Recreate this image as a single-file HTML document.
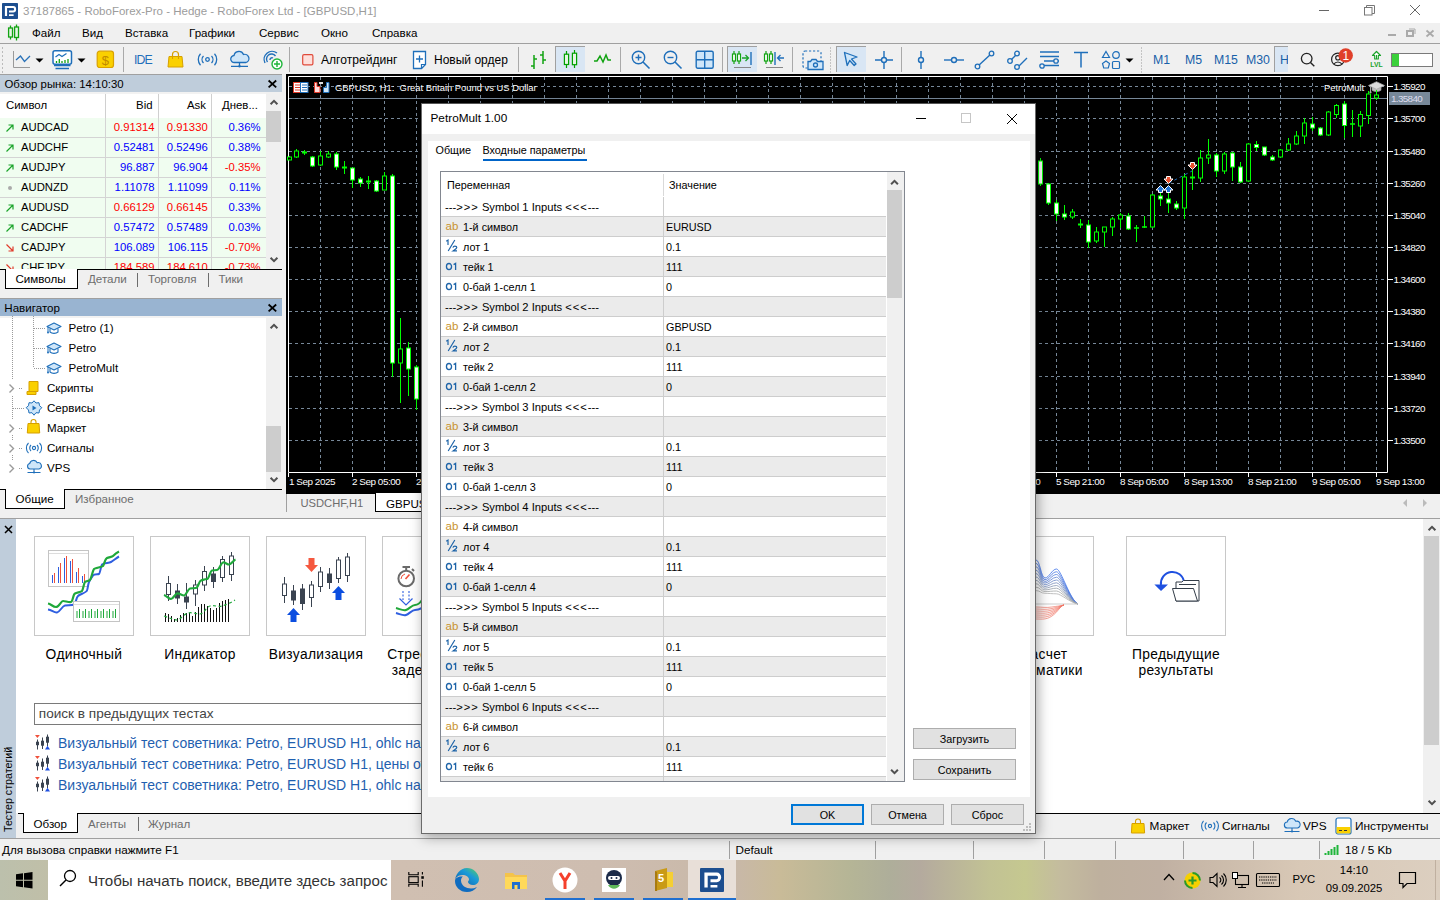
<!DOCTYPE html><html><head><meta charset="utf-8"><style>
*{box-sizing:border-box;margin:0;padding:0}
html,body{width:1440px;height:900px;overflow:hidden;background:#f0f0f0;font-family:"Liberation Sans",sans-serif;color:#000}
.a{position:absolute}
.t{position:absolute;white-space:nowrap;line-height:1}
svg{position:absolute;overflow:visible}
</style></head><body>
<div class="a" style="left:0px;top:0px;width:1440px;height:23px;background:#fff;"></div>
<svg style="left:2px;top:3px;" width="16" height="16" viewBox="0 0 16 16"><rect x="0" y="0" width="16" height="16" rx="0.8" fill="#1d4e8f"/><path d="M2.9 3H11.2A2.9 3.2 0 0 1 11.2 9.5H7V7.5H11A1 1.1 0 0 0 11 5.1H5.1V13H2.9z" fill="#fff"/><rect x="7" y="11.3" width="4.6" height="1.7" fill="#fff"/></svg>
<div class="t" style="left:23px;top:5.88px;font-size:11.5px;color:#9c9c9c;">37187865 - RoboForex-Pro - Hedge - RoboForex Ltd - [GBPUSD,H1]</div>
<div class="a" style="left:1319px;top:10px;width:10px;height:1px;background:#666;"></div>
<svg style="left:1364px;top:5px;" width="11" height="11" viewBox="0 0 11 11"><rect x="0.5" y="2.5" width="7.5" height="7.5" fill="none" stroke="#777"/><path d="M2.5 2.5V0.5h8v8H8" fill="none" stroke="#777"/></svg>
<svg style="left:1409px;top:4px;" width="12" height="12" viewBox="0 0 12 12"><path d="M1 1L11 11M11 1L1 11" stroke="#666" stroke-width="1"/></svg>
<div class="a" style="left:0px;top:23px;width:1440px;height:20px;background:#f0f0f0;"></div>
<div class="a" style="left:0px;top:43px;width:1440px;height:1px;background:#a0a0a0;"></div>
<svg style="left:7px;top:24px;" width="14" height="17" viewBox="0 0 14 17"><path d="M3.5 1.5v14M9.5 0.5v16" stroke="#12a312" stroke-width="1.3"/><rect x="1.6" y="4" width="3.9" height="9" fill="#e4f6e4" stroke="#12a312" stroke-width="1.3"/><rect x="7.6" y="3" width="3.9" height="10.5" fill="#e4f6e4" stroke="#12a312" stroke-width="1.3"/></svg>
<div class="t" style="left:32px;top:26.73px;font-size:11.6px;color:#000;">Файл</div>
<div class="t" style="left:82px;top:26.73px;font-size:11.6px;color:#000;">Вид</div>
<div class="t" style="left:125px;top:26.73px;font-size:11.6px;color:#000;">Вставка</div>
<div class="t" style="left:189px;top:26.73px;font-size:11.6px;color:#000;">Графики</div>
<div class="t" style="left:259px;top:26.73px;font-size:11.6px;color:#000;">Сервис</div>
<div class="t" style="left:321px;top:26.73px;font-size:11.6px;color:#000;">Окно</div>
<div class="t" style="left:372px;top:26.73px;font-size:11.6px;color:#000;">Справка</div>
<div class="a" style="left:1388px;top:34px;width:8px;height:2px;background:#aaa;"></div>
<svg style="left:1406px;top:28px;" width="10" height="9" viewBox="0 0 10 9"><rect x="1" y="3" width="6" height="5" fill="none" stroke="#aaa" stroke-width="2"/><path d="M3 1h6v5" fill="none" stroke="#aaa" stroke-width="1"/></svg>
<svg style="left:1426px;top:30px;" width="8" height="7" viewBox="0 0 8 7"><path d="M0.5 0.5L7.5 6.5M7.5 0.5L0.5 6.5" stroke="#aaa" stroke-width="1.8"/></svg>
<div class="a" style="left:0px;top:44px;width:1440px;height:30px;background:#f0f0f0;"></div>
<div class="a" style="left:2px;top:47px;width:1px;height:2px;background:#bbb;"></div>
<div class="a" style="left:2px;top:51px;width:1px;height:2px;background:#bbb;"></div>
<div class="a" style="left:2px;top:55px;width:1px;height:2px;background:#bbb;"></div>
<div class="a" style="left:2px;top:59px;width:1px;height:2px;background:#bbb;"></div>
<div class="a" style="left:2px;top:63px;width:1px;height:2px;background:#bbb;"></div>
<div class="a" style="left:2px;top:67px;width:1px;height:2px;background:#bbb;"></div>
<div class="a" style="left:2px;top:71px;width:1px;height:2px;background:#bbb;"></div>
<svg style="left:12px;top:50px;" width="20" height="19" viewBox="0 0 20 19"><path d="M1.5 1v16.5H18" fill="none" stroke="#999" stroke-width="1"/><path d="M4 10L8.5 6 12.5 11.5 18 6" fill="none" stroke="#2a72b8" stroke-width="1.3"/></svg>
<svg style="left:35px;top:58px;" width="9" height="5" viewBox="0 0 9 5"><path d="M0.5 0.5h8L4.5 4.5z" fill="#000"/></svg>
<svg style="left:52px;top:50px;" width="21" height="20" viewBox="0 0 21 20"><rect x="1" y="0.8" width="18.5" height="13.5" rx="2" fill="#fff" stroke="#1f6fba" stroke-width="1.5"/><path d="M3.5 7l3.5-2.5 3 2 4.5-3" fill="none" stroke="#1f6fba" stroke-width="1.2"/><path d="M4.5 11v2M7.3 9v4M10 11v2M13 10v3M16 9v4" stroke="#12a312" stroke-width="1.3"/><path d="M2 15.5h16.5M3.5 18.5h13.5" stroke="#1f6fba" stroke-width="1.3"/></svg>
<svg style="left:77px;top:58px;" width="9" height="5" viewBox="0 0 9 5"><path d="M0.5 0.5h8L4.5 4.5z" fill="#000"/></svg>
<svg style="left:96px;top:50px;" width="19" height="19" viewBox="0 0 19 19"><rect x="1.2" y="1.2" width="16.3" height="16.3" rx="2.5" fill="#fad000" stroke="#daa200" stroke-width="1.2"/><text x="9.35" y="14.6" font-family="Liberation Sans" font-size="13" fill="#c18a00" text-anchor="middle">$</text></svg>
<div class="a" style="left:123px;top:47px;width:1px;height:25px;background:#a9a9a9;"></div>
<div class="t" style="left:134px;top:53.60px;font-size:12.3px;color:#1f6fba;letter-spacing:-0.9px">IDE</div>
<svg style="left:167px;top:50px;" width="17" height="18" viewBox="0 0 17 18"><path d="M5.5 6V4.5a3 3 0 0 1 6 0V6" fill="none" stroke="#d6a000" stroke-width="1.2"/><path d="M2 6.5h13l1 10.5H1z" fill="#fad000" stroke="#d6a000" stroke-width="1"/><path d="M5.5 6v3M11.5 6v3" stroke="#d6a000" stroke-width="1.1"/></svg>
<svg style="left:198px;top:53px;" width="19" height="13" viewBox="0 0 19 13"><circle cx="9.5" cy="6.5" r="1.8" fill="none" stroke="#1f6fba" stroke-width="1.3"/><path d="M5.5 3a5 5 0 0 0 0 7M13.5 3a5 5 0 0 1 0 7M2.5 0.8a8.5 8.5 0 0 0 0 11.4M16.5 0.8a8.5 8.5 0 0 1 0 11.4" fill="none" stroke="#1f6fba" stroke-width="1.3"/></svg>
<svg style="left:230px;top:51px;" width="20" height="18" viewBox="0 0 20 18"><path d="M4.5 11.5a3.5 3.5 0 0 1-0.5-7 5 5 0 0 1 9.5-1 3.7 3.7 0 0 1 2.5 8z" fill="#cfe6f9" stroke="#1f6fba" stroke-width="1.3"/><path d="M9.5 11.5v3.5M1 15.3h17" stroke="#1f6fba" stroke-width="1.3"/><circle cx="9.5" cy="15.3" r="1.2" fill="#1f6fba"/></svg>
<svg style="left:262px;top:50px;" width="21" height="20" viewBox="0 0 21 20"><path d="M3 13a8 8 0 0 1 12-10M5.5 12a5 5 0 0 1 8-6M8 10a2 2 0 0 1 3-2" fill="none" stroke="#1f6fba" stroke-width="1.4"/><circle cx="15" cy="14" r="5" fill="#fff" stroke="#1fb53a" stroke-width="1.4"/><path d="M15 11v6M12 14h6" stroke="#1fb53a" stroke-width="1.4"/></svg>
<div class="a" style="left:289px;top:47px;width:1px;height:25px;background:#a9a9a9;"></div>
<svg style="left:301px;top:53px;" width="14" height="14" viewBox="0 0 14 14"><rect x="1.7" y="1.7" width="10.2" height="10.2" rx="1.3" fill="#fde0dc" stroke="#e04a3a" stroke-width="1.2"/></svg>
<div class="t" style="left:321px;top:54.29px;font-size:12.1px;color:#000;">Алготрейдинг</div>
<svg style="left:412px;top:50px;" width="17" height="20" viewBox="0 0 17 20"><path d="M1.5 1.5h9l0 0h3v13l-4 4h-8z" fill="#fff" stroke="#1f6fba" stroke-width="1.3"/><path d="M13.5 14.5h-4v4" fill="none" stroke="#1f6fba" stroke-width="1.2"/><path d="M7.5 5.5v7M4 9h7" stroke="#1f6fba" stroke-width="1.3"/></svg>
<div class="t" style="left:434px;top:54.34px;font-size:12px;color:#000;">Новый ордер</div>
<div class="a" style="left:518px;top:47px;width:1px;height:25px;background:#a9a9a9;"></div>
<svg style="left:529px;top:50px;" width="19" height="19" viewBox="0 0 19 19"><path d="M5 5v14M2 16h3M5 9h3M14 1v13M11 5h3M14 10h3" stroke="#12a312" stroke-width="1.5" fill="none"/></svg>
<div class="a" style="left:555px;top:46px;width:30px;height:26px;background:#d9e6f4;border-top:1px solid #a0a0a0;border-left:1px solid #a0a0a0"></div>
<svg style="left:562px;top:50px;" width="17" height="19" viewBox="0 0 17 19"><path d="M4.5 1v17M12.5 0v18" stroke="#00a000" stroke-width="1.2"/><rect x="2.4" y="4.2" width="4.2" height="10.3" fill="#e4f6e4" stroke="#00a000" stroke-width="1.2"/><rect x="10.4" y="3.2" width="4.2" height="11.5" fill="#e4f6e4" stroke="#00a000" stroke-width="1.2"/></svg>
<svg style="left:593px;top:52px;" width="19" height="12" viewBox="0 0 19 12"><path d="M1 9h3l3-5 3 6 3-7 2 5h3" fill="none" stroke="#12a312" stroke-width="1.5"/></svg>
<div class="a" style="left:620px;top:47px;width:1px;height:25px;background:#a9a9a9;"></div>
<svg style="left:631px;top:50px;" width="20" height="20" viewBox="0 0 20 20"><circle cx="7.5" cy="7.5" r="6.2" fill="none" stroke="#1f6fba" stroke-width="1.4"/><path d="M12 12l6.5 6.5" stroke="#1f6fba" stroke-width="1.6"/><path d="M7.5 4.5v6M4.5 7.5h6" stroke="#1f6fba" stroke-width="1.4"/></svg>
<svg style="left:663px;top:50px;" width="20" height="20" viewBox="0 0 20 20"><circle cx="7.5" cy="7.5" r="6.2" fill="none" stroke="#1f6fba" stroke-width="1.4"/><path d="M12 12l6.5 6.5" stroke="#1f6fba" stroke-width="1.6"/><path d="M4.5 7.5h6" stroke="#1f6fba" stroke-width="1.4"/></svg>
<svg style="left:695px;top:50px;" width="20" height="20" viewBox="0 0 20 20"><rect x="1.2" y="1.2" width="17" height="17" rx="1.5" fill="#cfe6f9" stroke="#1f6fba" stroke-width="1.4"/><path d="M9.7 1.2v17M1.2 9.7h17" stroke="#1f6fba" stroke-width="1.4"/></svg>
<div class="a" style="left:722px;top:47px;width:1px;height:25px;background:#a9a9a9;"></div>
<div class="a" style="left:727px;top:46px;width:30px;height:26px;background:#d9e6f4;border-top:1px solid #a0a0a0;border-left:1px solid #a0a0a0"></div>
<svg style="left:731px;top:51px;" width="22" height="18" viewBox="0 0 22 18"><path d="M3 0v13M8 0v13" stroke="#12a312" stroke-width="1.2"/><rect x="1.5" y="3" width="3" height="7" fill="#fff" stroke="#12a312" stroke-width="1.2"/><rect x="6.5" y="3" width="3" height="7" fill="#fff" stroke="#12a312" stroke-width="1.2"/><path d="M11 7h6M14.5 4l3 3-3 3" fill="none" stroke="#1aa32a" stroke-width="1.3"/><path d="M20 1v13" stroke="#1f6fba" stroke-width="1.4"/><path d="M3 16.5h17" stroke="#888" stroke-width="1"/></svg>
<svg style="left:763px;top:51px;" width="22" height="18" viewBox="0 0 22 18"><path d="M3 0v13M8 0v13" stroke="#12a312" stroke-width="1.2"/><rect x="1.5" y="3" width="3" height="7" fill="#fff" stroke="#12a312" stroke-width="1.2"/><rect x="6.5" y="3" width="3" height="7" fill="#fff" stroke="#12a312" stroke-width="1.2"/><path d="M12 1v13" stroke="#1f6fba" stroke-width="1.4"/><path d="M21 7h-6M17.5 4l-3 3 3 3" fill="none" stroke="#1f6fba" stroke-width="1.3"/><path d="M3 16.5h17" stroke="#888" stroke-width="1"/></svg>
<div class="a" style="left:792px;top:47px;width:1px;height:25px;background:#a9a9a9;"></div>
<svg style="left:802px;top:50px;" width="22" height="20" viewBox="0 0 22 20"><rect x="1" y="1" width="18" height="17" rx="2" fill="none" stroke="#1f6fba" stroke-width="1.2" stroke-dasharray="2.2 1.8"/><path d="M6 11.5h2.5l1.5-2h4l1.5 2H21v8H6z" fill="#cfe6f9" stroke="#1f6fba" stroke-width="1.3"/><circle cx="13.5" cy="15" r="2" fill="none" stroke="#1f6fba" stroke-width="1.3"/></svg>
<div class="a" style="left:830px;top:47px;width:1px;height:2px;background:#c4c4c4;"></div>
<div class="a" style="left:830px;top:50px;width:1px;height:2px;background:#c4c4c4;"></div>
<div class="a" style="left:830px;top:53px;width:1px;height:2px;background:#c4c4c4;"></div>
<div class="a" style="left:830px;top:56px;width:1px;height:2px;background:#c4c4c4;"></div>
<div class="a" style="left:830px;top:59px;width:1px;height:2px;background:#c4c4c4;"></div>
<div class="a" style="left:830px;top:62px;width:1px;height:2px;background:#c4c4c4;"></div>
<div class="a" style="left:830px;top:65px;width:1px;height:2px;background:#c4c4c4;"></div>
<div class="a" style="left:830px;top:68px;width:1px;height:2px;background:#c4c4c4;"></div>
<div class="a" style="left:830px;top:71px;width:1px;height:2px;background:#c4c4c4;"></div>
<div class="a" style="left:836px;top:46px;width:30px;height:26px;background:#d9e6f4;border-top:1px solid #a0a0a0;border-left:1px solid #a0a0a0"></div>
<svg style="left:843px;top:51px;" width="16" height="16" viewBox="0 0 16 16"><path d="M1.5 1.5l12.5 4.5-5.5 2 4.5 5-1.8 1.5-4.5-5-2.5 5z" fill="#cfe6f9" stroke="#1f6fba" stroke-width="1.3" stroke-linejoin="round"/></svg>
<svg style="left:874px;top:50px;" width="20" height="20" viewBox="0 0 20 20"><path d="M10 1v18M1 10h18" stroke="#1f6fba" stroke-width="1.4"/><circle cx="10" cy="10" r="2.5" fill="#f0f0f0" stroke="#1f6fba" stroke-width="1.4"/></svg>
<div class="a" style="left:901px;top:47px;width:1px;height:25px;background:#a9a9a9;"></div>
<svg style="left:915px;top:50px;" width="12" height="20" viewBox="0 0 12 20"><path d="M6 1v18" stroke="#1f6fba" stroke-width="1.4"/><circle cx="6" cy="10" r="2.5" fill="#f0f0f0" stroke="#1f6fba" stroke-width="1.4"/></svg>
<svg style="left:943px;top:50px;" width="22" height="20" viewBox="0 0 22 20"><path d="M1 10h20" stroke="#1f6fba" stroke-width="1.4"/><circle cx="11" cy="10" r="2.5" fill="#f0f0f0" stroke="#1f6fba" stroke-width="1.4"/></svg>
<svg style="left:974px;top:50px;" width="21" height="20" viewBox="0 0 21 20"><path d="M4 16L17 4" stroke="#1f6fba" stroke-width="1.4"/><circle cx="3.5" cy="16.5" r="2.3" fill="#f0f0f0" stroke="#1f6fba" stroke-width="1.3"/><circle cx="17.5" cy="3.5" r="2.3" fill="#f0f0f0" stroke="#1f6fba" stroke-width="1.3"/></svg>
<svg style="left:1007px;top:50px;" width="22" height="20" viewBox="0 0 22 20"><path d="M3 11L10 4M11 17L20 8" stroke="#1f6fba" stroke-width="1.4"/><circle cx="3" cy="11" r="2.3" fill="#f0f0f0" stroke="#1f6fba" stroke-width="1.3"/><circle cx="10" cy="3.5" r="2.3" fill="#f0f0f0" stroke="#1f6fba" stroke-width="1.3"/><circle cx="10" cy="17" r="2.3" fill="#f0f0f0" stroke="#1f6fba" stroke-width="1.3"/></svg>
<svg style="left:1039px;top:50px;" width="21" height="20" viewBox="0 0 21 20"><path d="M1 2h19M1 6.5h19M5 11h15M5 15.5h15" stroke="#1f6fba" stroke-width="1.3"/><circle cx="17" cy="11" r="2.2" fill="#f0f0f0" stroke="#1f6fba" stroke-width="1.3"/><circle cx="3" cy="16" r="2.2" fill="#f0f0f0" stroke="#1f6fba" stroke-width="1.3"/></svg>
<svg style="left:1073px;top:51px;" width="16" height="17" viewBox="0 0 16 17"><path d="M1 1.5h14M8 1.5v15" stroke="#1f6fba" stroke-width="1.5"/></svg>
<svg style="left:1101px;top:50px;" width="22" height="20" viewBox="0 0 22 20"><path d="M5 1.5l3.5 6h-7z" fill="none" stroke="#1f6fba" stroke-width="1.2"/><circle cx="15" cy="5" r="3.3" fill="none" stroke="#1f6fba" stroke-width="1.2"/><path d="M5 11l3.5 2.5-1.2 4.5h-4.6L1.5 13.5z" fill="none" stroke="#1f6fba" stroke-width="1.2"/><rect x="11.5" y="11.5" width="7" height="7" rx="1" fill="none" stroke="#1f6fba" stroke-width="1.2"/></svg>
<svg style="left:1125px;top:58px;" width="9" height="5" viewBox="0 0 9 5"><path d="M0.5 0.5h8L4.5 4.5z" fill="#000"/></svg>
<div class="a" style="left:1141px;top:47px;width:1px;height:2px;background:#c4c4c4;"></div>
<div class="a" style="left:1141px;top:50px;width:1px;height:2px;background:#c4c4c4;"></div>
<div class="a" style="left:1141px;top:53px;width:1px;height:2px;background:#c4c4c4;"></div>
<div class="a" style="left:1141px;top:56px;width:1px;height:2px;background:#c4c4c4;"></div>
<div class="a" style="left:1141px;top:59px;width:1px;height:2px;background:#c4c4c4;"></div>
<div class="a" style="left:1141px;top:62px;width:1px;height:2px;background:#c4c4c4;"></div>
<div class="a" style="left:1141px;top:65px;width:1px;height:2px;background:#c4c4c4;"></div>
<div class="a" style="left:1141px;top:68px;width:1px;height:2px;background:#c4c4c4;"></div>
<div class="a" style="left:1141px;top:71px;width:1px;height:2px;background:#c4c4c4;"></div>
<div class="t" style="left:1153px;top:54.30px;font-size:12.3px;color:#1860a8;">M1</div>
<div class="t" style="left:1185px;top:54.30px;font-size:12.3px;color:#1860a8;">M5</div>
<div class="t" style="left:1214px;top:54.30px;font-size:12.3px;color:#1860a8;">M15</div>
<div class="t" style="left:1246px;top:54.30px;font-size:12.3px;color:#1860a8;">M30</div>
<div class="a" style="left:1274px;top:46px;width:14px;height:26px;background:#d9e6f4;border-top:1px solid #a0a0a0;border-left:1px solid #a0a0a0;overflow:hidden"><div class="t" style="left:5px;top:7.1px;font-size:12.3px;color:#1860a8">H</div></div>
<svg style="left:1299px;top:51px;" width="18" height="18" viewBox="0 0 18 18"><circle cx="7.7" cy="7.6" r="5.3" fill="none" stroke="#222" stroke-width="1.3"/><path d="M11.5 11.5l3.8 3.8" stroke="#222" stroke-width="1.4"/></svg>
<svg style="left:1330px;top:52px;" width="16" height="16" viewBox="0 0 16 16"><circle cx="7.9" cy="7.4" r="6.3" fill="none" stroke="#222" stroke-width="1.2"/><circle cx="7.9" cy="5.8" r="2.2" fill="none" stroke="#222" stroke-width="1.2"/><path d="M3.8 12.3a4.8 4.8 0 0 1 8.2 0" fill="none" stroke="#222" stroke-width="1.2"/></svg>
<svg style="left:1338px;top:48px;" width="16" height="16" viewBox="0 0 16 16"><circle cx="7.7" cy="7.5" r="7.2" fill="#e0402a"/><text x="7.9" y="12.2" font-family="Liberation Sans" font-size="12" fill="#fff" text-anchor="middle">1</text></svg>
<svg style="left:1369px;top:50px;" width="16" height="18" viewBox="0 0 16 18"><path d="M7.5 1.5L11.5 5.5H9.3V9H5.7V5.5H3.5z" fill="#fff" stroke="#1aa32a" stroke-width="1.2" stroke-linejoin="round"/><path d="M7.5 5v4" stroke="#1aa32a" stroke-width="1"/><text x="7.5" y="16.5" font-family="Liberation Sans" font-size="6.8" font-weight="bold" fill="#1aa32a" text-anchor="middle">LVL</text></svg>
<div class="a" style="left:1391px;top:53px;width:42px;height:14px;background:#fff;border:1px solid #7a7a7a"></div>
<div class="a" style="left:1392px;top:54px;width:7px;height:12px;background:#3ad03a;"></div>
<div class="a" style="left:0px;top:74px;width:282px;height:1px;background:#a0a0a0;"></div>
<div class="a" style="left:0px;top:75px;width:282px;height:17px;background:#bfcddb;"></div>
<div class="t" style="left:4.5px;top:78.53px;font-size:11.4px;color:#000;">Обзор рынка: 14:10:30</div>
<svg style="left:267px;top:79px;" width="11" height="10" viewBox="0 0 11 10"><path d="M1.6 1.5L9.2 8.3M9.2 1.5L1.6 8.3" stroke="#000" stroke-width="1.8"/></svg>
<div class="a" style="left:0px;top:92px;width:266px;height:177px;background:#fff;"></div>
<div class="a" style="left:0px;top:92px;width:266px;height:2px;background:#f2f2f2;"></div>
<div class="t" style="left:6px;top:100.33px;font-size:11.4px;color:#000;">Символ</div>
<div class="t" style="right:1287.5px;top:100.33px;font-size:11.4px;color:#000;">Bid</div>
<div class="t" style="right:1234px;top:100.33px;font-size:11.4px;color:#000;">Ask</div>
<div class="t" style="left:222px;top:100.33px;font-size:11.4px;color:#000;">Днев...</div>
<div class="a" style="left:105px;top:94px;width:1px;height:24px;background:#d0d0d0;"></div>
<div class="a" style="left:158px;top:94px;width:1px;height:24px;background:#d0d0d0;"></div>
<div class="a" style="left:211px;top:94px;width:1px;height:24px;background:#d0d0d0;"></div>
<div class="a" style="left:0;top:118px;width:266px;height:151px;overflow:hidden">
<div class="a" style="left:0;top:0px;width:266px;height:19px;background:#f0fdf0"></div>
<div class="a" style="left:0;top:19px;width:266px;height:1px;background:#d4d4d4"></div>
<div class="a" style="left:105px;top:0px;width:1px;height:20px;background:#d4d4d4"></div>
<div class="a" style="left:158px;top:0px;width:1px;height:20px;background:#d4d4d4"></div>
<div class="a" style="left:211px;top:0px;width:1px;height:20px;background:#d4d4d4"></div>
<svg style="left:5px;top:5px" width="10" height="10"><path d="M1.5 8.5L8 2M3.5 2H8v4.5" fill="none" stroke="#1aa32a" stroke-width="1.2"/></svg>
<div class="t" style="left:21px;top:4.0px;font-size:11.3px">AUDCAD</div>
<div class="t" style="right:111.4px;top:4.0px;font-size:11.3px;color:#f00">0.91314</div>
<div class="t" style="right:58.3px;top:4.0px;font-size:11.3px;color:#f00">0.91330</div>
<div class="t" style="right:5.5px;top:4.0px;font-size:11.3px;color:#00f">0.36%</div>
<div class="a" style="left:0;top:20px;width:266px;height:19px;background:#f0fdf0"></div>
<div class="a" style="left:0;top:39px;width:266px;height:1px;background:#d4d4d4"></div>
<div class="a" style="left:105px;top:20px;width:1px;height:20px;background:#d4d4d4"></div>
<div class="a" style="left:158px;top:20px;width:1px;height:20px;background:#d4d4d4"></div>
<div class="a" style="left:211px;top:20px;width:1px;height:20px;background:#d4d4d4"></div>
<svg style="left:5px;top:25px" width="10" height="10"><path d="M1.5 8.5L8 2M3.5 2H8v4.5" fill="none" stroke="#1aa32a" stroke-width="1.2"/></svg>
<div class="t" style="left:21px;top:24.0px;font-size:11.3px">AUDCHF</div>
<div class="t" style="right:111.4px;top:24.0px;font-size:11.3px;color:#00f">0.52481</div>
<div class="t" style="right:58.3px;top:24.0px;font-size:11.3px;color:#00f">0.52496</div>
<div class="t" style="right:5.5px;top:24.0px;font-size:11.3px;color:#00f">0.38%</div>
<div class="a" style="left:0;top:40px;width:266px;height:19px;background:#f0fdf0"></div>
<div class="a" style="left:0;top:59px;width:266px;height:1px;background:#d4d4d4"></div>
<div class="a" style="left:105px;top:40px;width:1px;height:20px;background:#d4d4d4"></div>
<div class="a" style="left:158px;top:40px;width:1px;height:20px;background:#d4d4d4"></div>
<div class="a" style="left:211px;top:40px;width:1px;height:20px;background:#d4d4d4"></div>
<svg style="left:5px;top:45px" width="10" height="10"><path d="M1.5 8.5L8 2M3.5 2H8v4.5" fill="none" stroke="#1aa32a" stroke-width="1.2"/></svg>
<div class="t" style="left:21px;top:44.0px;font-size:11.3px">AUDJPY</div>
<div class="t" style="right:111.4px;top:44.0px;font-size:11.3px;color:#00f">96.887</div>
<div class="t" style="right:58.3px;top:44.0px;font-size:11.3px;color:#00f">96.904</div>
<div class="t" style="right:5.5px;top:44.0px;font-size:11.3px;color:#f00">-0.35%</div>
<div class="a" style="left:0;top:60px;width:266px;height:19px;background:#f0fdf0"></div>
<div class="a" style="left:0;top:79px;width:266px;height:1px;background:#d4d4d4"></div>
<div class="a" style="left:105px;top:60px;width:1px;height:20px;background:#d4d4d4"></div>
<div class="a" style="left:158px;top:60px;width:1px;height:20px;background:#d4d4d4"></div>
<div class="a" style="left:211px;top:60px;width:1px;height:20px;background:#d4d4d4"></div>
<div class="a" style="left:8px;top:68px;width:4px;height:4px;border-radius:2px;background:#aaa"></div>
<div class="t" style="left:21px;top:64.0px;font-size:11.3px">AUDNZD</div>
<div class="t" style="right:111.4px;top:64.0px;font-size:11.3px;color:#00f">1.11078</div>
<div class="t" style="right:58.3px;top:64.0px;font-size:11.3px;color:#00f">1.11099</div>
<div class="t" style="right:5.5px;top:64.0px;font-size:11.3px;color:#00f">0.11%</div>
<div class="a" style="left:0;top:80px;width:266px;height:19px;background:#f0fdf0"></div>
<div class="a" style="left:0;top:99px;width:266px;height:1px;background:#d4d4d4"></div>
<div class="a" style="left:105px;top:80px;width:1px;height:20px;background:#d4d4d4"></div>
<div class="a" style="left:158px;top:80px;width:1px;height:20px;background:#d4d4d4"></div>
<div class="a" style="left:211px;top:80px;width:1px;height:20px;background:#d4d4d4"></div>
<svg style="left:5px;top:85px" width="10" height="10"><path d="M1.5 8.5L8 2M3.5 2H8v4.5" fill="none" stroke="#1aa32a" stroke-width="1.2"/></svg>
<div class="t" style="left:21px;top:84.0px;font-size:11.3px">AUDUSD</div>
<div class="t" style="right:111.4px;top:84.0px;font-size:11.3px;color:#f00">0.66129</div>
<div class="t" style="right:58.3px;top:84.0px;font-size:11.3px;color:#f00">0.66145</div>
<div class="t" style="right:5.5px;top:84.0px;font-size:11.3px;color:#00f">0.33%</div>
<div class="a" style="left:0;top:100px;width:266px;height:19px;background:#f0fdf0"></div>
<div class="a" style="left:0;top:119px;width:266px;height:1px;background:#d4d4d4"></div>
<div class="a" style="left:105px;top:100px;width:1px;height:20px;background:#d4d4d4"></div>
<div class="a" style="left:158px;top:100px;width:1px;height:20px;background:#d4d4d4"></div>
<div class="a" style="left:211px;top:100px;width:1px;height:20px;background:#d4d4d4"></div>
<svg style="left:5px;top:105px" width="10" height="10"><path d="M1.5 8.5L8 2M3.5 2H8v4.5" fill="none" stroke="#1aa32a" stroke-width="1.2"/></svg>
<div class="t" style="left:21px;top:104.0px;font-size:11.3px">CADCHF</div>
<div class="t" style="right:111.4px;top:104.0px;font-size:11.3px;color:#00f">0.57472</div>
<div class="t" style="right:58.3px;top:104.0px;font-size:11.3px;color:#00f">0.57489</div>
<div class="t" style="right:5.5px;top:104.0px;font-size:11.3px;color:#00f">0.03%</div>
<div class="a" style="left:0;top:120px;width:266px;height:19px;background:#f0fdf0"></div>
<div class="a" style="left:0;top:139px;width:266px;height:1px;background:#d4d4d4"></div>
<div class="a" style="left:105px;top:120px;width:1px;height:20px;background:#d4d4d4"></div>
<div class="a" style="left:158px;top:120px;width:1px;height:20px;background:#d4d4d4"></div>
<div class="a" style="left:211px;top:120px;width:1px;height:20px;background:#d4d4d4"></div>
<svg style="left:5px;top:125px" width="10" height="10"><path d="M1.5 1.5L8 8M3.5 8H8V3.5" fill="none" stroke="#e03a2a" stroke-width="1.2"/></svg>
<div class="t" style="left:21px;top:124.0px;font-size:11.3px">CADJPY</div>
<div class="t" style="right:111.4px;top:124.0px;font-size:11.3px;color:#00f">106.089</div>
<div class="t" style="right:58.3px;top:124.0px;font-size:11.3px;color:#00f">106.115</div>
<div class="t" style="right:5.5px;top:124.0px;font-size:11.3px;color:#f00">-0.70%</div>
<div class="a" style="left:0;top:140px;width:266px;height:19px;background:#f0fdf0"></div>
<div class="a" style="left:0;top:159px;width:266px;height:1px;background:#d4d4d4"></div>
<div class="a" style="left:105px;top:140px;width:1px;height:20px;background:#d4d4d4"></div>
<div class="a" style="left:158px;top:140px;width:1px;height:20px;background:#d4d4d4"></div>
<div class="a" style="left:211px;top:140px;width:1px;height:20px;background:#d4d4d4"></div>
<svg style="left:5px;top:145px" width="10" height="10"><path d="M1.5 1.5L8 8M3.5 8H8V3.5" fill="none" stroke="#e03a2a" stroke-width="1.2"/></svg>
<div class="t" style="left:21px;top:144.0px;font-size:11.3px">CHFJPY</div>
<div class="t" style="right:111.4px;top:144.0px;font-size:11.3px;color:#f00">184.589</div>
<div class="t" style="right:58.3px;top:144.0px;font-size:11.3px;color:#f00">184.610</div>
<div class="t" style="right:5.5px;top:144.0px;font-size:11.3px;color:#f00">-0.73%</div>
</div>
<div class="a" style="left:266px;top:92px;width:16px;height:177px;background:#f0f0f0;"></div>
<svg style="left:269px;top:99px;" width="10" height="7" viewBox="0 0 10 7"><path d="M1.6 5.3L5 1.9 8.4 5.3" fill="none" stroke="#505050" stroke-width="2"/></svg>
<div class="a" style="left:266px;top:111px;width:15px;height:31px;background:#cdcdcd;"></div>
<svg style="left:269px;top:256px;" width="10" height="7" viewBox="0 0 10 7"><path d="M1.6 1.7L5 5.1 8.4 1.7" fill="none" stroke="#505050" stroke-width="2"/></svg>
<div class="a" style="left:0px;top:269px;width:282px;height:1px;background:#000;"></div>
<div class="a" style="left:5px;top:269px;width:73px;height:20px;background:#fff;border:1px solid #000;border-top:none"></div>
<div class="t" style="left:15.5px;top:273.43px;font-size:11.6px;color:#000;">Символы</div>
<div class="t" style="left:88px;top:273.43px;font-size:11.6px;color:#6d6d6d;">Детали</div>
<div class="a" style="left:137px;top:273px;width:1px;height:14px;background:#6d6d6d;"></div>
<div class="t" style="left:148px;top:273.43px;font-size:11.6px;color:#6d6d6d;">Торговля</div>
<div class="a" style="left:208px;top:273px;width:1px;height:14px;background:#6d6d6d;"></div>
<div class="t" style="left:218.5px;top:273.43px;font-size:11.6px;color:#6d6d6d;">Тики</div>
<div class="a" style="left:0px;top:290px;width:282px;height:8px;background:#f0f0f0;"></div>
<div class="a" style="left:0px;top:298px;width:282px;height:1px;background:#a0a0a0;"></div>
<div class="a" style="left:0px;top:299px;width:282px;height:17px;background:#99b4d1;"></div>
<div class="t" style="left:4.3px;top:301.93px;font-size:11.6px;color:#000;">Навигатор</div>
<svg style="left:267px;top:303px;" width="11" height="10" viewBox="0 0 11 10"><path d="M1.6 1.5L9.2 8.3M9.2 1.5L1.6 8.3" stroke="#000" stroke-width="1.8"/></svg>
<div class="a" style="left:0px;top:316px;width:266px;height:173px;background:#fff;"></div>
<div class="a" style="left:0px;top:316px;width:266px;height:2px;background:#f2f2f2;"></div>
<div class="a" style="left:12px;top:316px;width:1px;height:63px;background:repeating-linear-gradient(#9a9a9a 0 1px,transparent 1px 2px)"></div>
<div class="a" style="left:33px;top:316px;width:1px;height:51px;background:repeating-linear-gradient(#9a9a9a 0 1px,transparent 1px 2px)"></div>
<div class="a" style="left:34px;top:328px;width:11px;height:1px;background:repeating-linear-gradient(90deg,#9a9a9a 0 1px,transparent 1px 2px)"></div>
<div class="a" style="left:34px;top:348px;width:11px;height:1px;background:repeating-linear-gradient(90deg,#9a9a9a 0 1px,transparent 1px 2px)"></div>
<div class="a" style="left:34px;top:368px;width:11px;height:1px;background:repeating-linear-gradient(90deg,#9a9a9a 0 1px,transparent 1px 2px)"></div>
<svg style="left:46px;top:320px;" width="17" height="15" viewBox="0 0 17 15"><path d="M1 6.5L8 3l7 3.5-7 3.5z" fill="#cfe6f9" stroke="#1f6fba" stroke-width="1.1" stroke-linejoin="round"/><path d="M4 8.5v3.5c2 1.8 6 1.8 8 0V8.5" fill="none" stroke="#1f6fba" stroke-width="1.1"/><path d="M2 7v5" stroke="#1f6fba" stroke-width="1"/><circle cx="2" cy="12.5" r="1" fill="#1f6fba"/></svg>
<div class="t" style="left:68.5px;top:322.43px;font-size:11.6px;color:#000;">Petro (1)</div>
<svg style="left:46px;top:340px;" width="17" height="15" viewBox="0 0 17 15"><path d="M1 6.5L8 3l7 3.5-7 3.5z" fill="#cfe6f9" stroke="#1f6fba" stroke-width="1.1" stroke-linejoin="round"/><path d="M4 8.5v3.5c2 1.8 6 1.8 8 0V8.5" fill="none" stroke="#1f6fba" stroke-width="1.1"/><path d="M2 7v5" stroke="#1f6fba" stroke-width="1"/><circle cx="2" cy="12.5" r="1" fill="#1f6fba"/></svg>
<div class="t" style="left:68.5px;top:342.43px;font-size:11.6px;color:#000;">Petro</div>
<svg style="left:46px;top:360px;" width="17" height="15" viewBox="0 0 17 15"><path d="M1 6.5L8 3l7 3.5-7 3.5z" fill="#cfe6f9" stroke="#1f6fba" stroke-width="1.1" stroke-linejoin="round"/><path d="M4 8.5v3.5c2 1.8 6 1.8 8 0V8.5" fill="none" stroke="#1f6fba" stroke-width="1.1"/><path d="M2 7v5" stroke="#1f6fba" stroke-width="1"/><circle cx="2" cy="12.5" r="1" fill="#1f6fba"/></svg>
<div class="t" style="left:68.5px;top:362.43px;font-size:11.6px;color:#000;">PetroMult</div>
<div class="a" style="left:12px;top:396px;width:1px;height:24px;background:repeating-linear-gradient(#9a9a9a 0 1px,transparent 1px 2px)"></div>
<div class="a" style="left:12px;top:435px;width:1px;height:5px;background:repeating-linear-gradient(#9a9a9a 0 1px,transparent 1px 2px)"></div>
<div class="a" style="left:12px;top:455px;width:1px;height:5px;background:repeating-linear-gradient(#9a9a9a 0 1px,transparent 1px 2px)"></div>
<svg style="left:8px;top:383px;" width="8" height="11" viewBox="0 0 8 11"><path d="M1.5 1.5L5.5 5.5 1.5 9.5" fill="none" stroke="#9a9a9a" stroke-width="1.4"/></svg>
<div class="a" style="left:19px;top:388px;width:4px;height:1px;background:repeating-linear-gradient(90deg,#9a9a9a 0 1px,transparent 1px 2px)"></div>
<svg style="left:8px;top:423px;" width="8" height="11" viewBox="0 0 8 11"><path d="M1.5 1.5L5.5 5.5 1.5 9.5" fill="none" stroke="#9a9a9a" stroke-width="1.4"/></svg>
<div class="a" style="left:19px;top:428px;width:4px;height:1px;background:repeating-linear-gradient(90deg,#9a9a9a 0 1px,transparent 1px 2px)"></div>
<svg style="left:8px;top:443px;" width="8" height="11" viewBox="0 0 8 11"><path d="M1.5 1.5L5.5 5.5 1.5 9.5" fill="none" stroke="#9a9a9a" stroke-width="1.4"/></svg>
<div class="a" style="left:19px;top:448px;width:4px;height:1px;background:repeating-linear-gradient(90deg,#9a9a9a 0 1px,transparent 1px 2px)"></div>
<svg style="left:8px;top:463px;" width="8" height="11" viewBox="0 0 8 11"><path d="M1.5 1.5L5.5 5.5 1.5 9.5" fill="none" stroke="#9a9a9a" stroke-width="1.4"/></svg>
<div class="a" style="left:19px;top:468px;width:4px;height:1px;background:repeating-linear-gradient(90deg,#9a9a9a 0 1px,transparent 1px 2px)"></div>
<div class="a" style="left:13px;top:408px;width:12px;height:1px;background:repeating-linear-gradient(90deg,#9a9a9a 0 1px,transparent 1px 2px)"></div>
<svg style="left:26px;top:380px;" width="14" height="15" viewBox="0 0 14 15"><path d="M3 1.5h9v10H3z" fill="#fad000" stroke="#d6a000" stroke-width="1"/><path d="M1 11.5h9v3H1z" fill="#fad000" stroke="#d6a000" stroke-width="1"/></svg>
<div class="t" style="left:47px;top:382.43px;font-size:11.6px;color:#000;">Скрипты</div>
<svg style="left:26px;top:400px;" width="16" height="16" viewBox="0 0 16 16"><path d="M8 0.8l2 2.2 3-0.3 0.5 3 2.3 2L13.5 10l-0.5 3-3-0.3-2 2.5-2-2.5-3 0.3L2.5 10 0.2 7.7l2.3-2L3 2.7l3 0.3z" fill="#cfe6f9" stroke="#1f6fba" stroke-width="1"/><path d="M6.5 5.5v5l4-2.5z" fill="#1f6fba"/></svg>
<div class="t" style="left:47px;top:402.43px;font-size:11.6px;color:#000;">Сервисы</div>
<svg style="left:27px;top:419px;" width="13" height="15" viewBox="0 0 13 15"><path d="M4 4V3a2.5 2.5 0 0 1 5 0v1" fill="none" stroke="#d6a000" stroke-width="1.1"/><path d="M1 4.5h11l0.7 9.5H0.3z" fill="#fad000" stroke="#d6a000" stroke-width="1"/></svg>
<div class="t" style="left:47px;top:422.43px;font-size:11.6px;color:#000;">Маркет</div>
<svg style="left:26px;top:442px;" width="16" height="12" viewBox="0 0 16 12"><circle cx="8" cy="6" r="1.6" fill="none" stroke="#1f6fba" stroke-width="1.1"/><path d="M5 3a4.2 4.2 0 0 0 0 6M11 3a4.2 4.2 0 0 1 0 6M2.5 1a7 7 0 0 0 0 10M13.5 1a7 7 0 0 1 0 10" fill="none" stroke="#1f6fba" stroke-width="1.1"/></svg>
<div class="t" style="left:47px;top:442.43px;font-size:11.6px;color:#000;">Сигналы</div>
<svg style="left:26px;top:460px;" width="16" height="16" viewBox="0 0 16 16"><path d="M4 9a2.8 2.8 0 0 1-0.3-5.5 4 4 0 0 1 7.5-0.8 3 3 0 0 1 1.8 6.3z" fill="#cfe6f9" stroke="#1f6fba" stroke-width="1.1"/><path d="M8 9v3M1.5 12.5h13" stroke="#1f6fba" stroke-width="1.1"/><circle cx="8" cy="12.5" r="1" fill="#1f6fba"/></svg>
<div class="t" style="left:47px;top:462.43px;font-size:11.6px;color:#000;">VPS</div>
<div class="a" style="left:266px;top:316px;width:16px;height:173px;background:#f0f0f0;"></div>
<svg style="left:269px;top:323px;" width="10" height="7" viewBox="0 0 10 7"><path d="M1.6 5.3L5 1.9 8.4 5.3" fill="none" stroke="#505050" stroke-width="2"/></svg>
<div class="a" style="left:266px;top:426px;width:15px;height:46px;background:#cdcdcd;"></div>
<svg style="left:269px;top:476px;" width="10" height="7" viewBox="0 0 10 7"><path d="M1.6 1.7L5 5.1 8.4 1.7" fill="none" stroke="#505050" stroke-width="2"/></svg>
<div class="a" style="left:0px;top:489px;width:282px;height:1px;background:#000;"></div>
<div class="a" style="left:5px;top:489px;width:60px;height:20px;background:#fff;border:1px solid #000;border-top:none"></div>
<div class="t" style="left:15.5px;top:493.43px;font-size:11.6px;color:#000;">Общие</div>
<div class="t" style="left:75px;top:493.43px;font-size:11.6px;color:#6d6d6d;">Избранное</div>
<div class="a" style="left:0px;top:510px;width:282px;height:8px;background:#f0f0f0;"></div>
<div class="a" style="left:282px;top:74px;width:4px;height:444px;background:#f0f0f0;"></div>
<div class="a" style="left:286px;top:74px;width:1154px;height:420px;background:#000;"></div>
<svg style="left:0px;top:0px;pointer-events:none" width="1440" height="500" viewBox="0 0 1440 500"><path d="M289 86.5H1387" stroke="#778899" stroke-width="1" stroke-dasharray="3 3"/><path d="M289 118.5H1387" stroke="#778899" stroke-width="1" stroke-dasharray="3 3"/><path d="M289 151.5H1387" stroke="#778899" stroke-width="1" stroke-dasharray="3 3"/><path d="M289 183.5H1387" stroke="#778899" stroke-width="1" stroke-dasharray="3 3"/><path d="M289 215.5H1387" stroke="#778899" stroke-width="1" stroke-dasharray="3 3"/><path d="M289 247.5H1387" stroke="#778899" stroke-width="1" stroke-dasharray="3 3"/><path d="M289 279.5H1387" stroke="#778899" stroke-width="1" stroke-dasharray="3 3"/><path d="M289 311.5H1387" stroke="#778899" stroke-width="1" stroke-dasharray="3 3"/><path d="M289 343.5H1387" stroke="#778899" stroke-width="1" stroke-dasharray="3 3"/><path d="M289 376.5H1387" stroke="#778899" stroke-width="1" stroke-dasharray="3 3"/><path d="M289 408.5H1387" stroke="#778899" stroke-width="1" stroke-dasharray="3 3"/><path d="M289 440.5H1387" stroke="#778899" stroke-width="1" stroke-dasharray="3 3"/><path d="M320.5 77V470" stroke="#778899" stroke-width="1" stroke-dasharray="3 3"/><path d="M352.5 77V470" stroke="#778899" stroke-width="1" stroke-dasharray="3 3"/><path d="M384.5 77V470" stroke="#778899" stroke-width="1" stroke-dasharray="3 3"/><path d="M416.5 77V470" stroke="#778899" stroke-width="1" stroke-dasharray="3 3"/><path d="M448.5 77V470" stroke="#778899" stroke-width="1" stroke-dasharray="3 3"/><path d="M480.5 77V470" stroke="#778899" stroke-width="1" stroke-dasharray="3 3"/><path d="M512.5 77V470" stroke="#778899" stroke-width="1" stroke-dasharray="3 3"/><path d="M544.5 77V470" stroke="#778899" stroke-width="1" stroke-dasharray="3 3"/><path d="M576.5 77V470" stroke="#778899" stroke-width="1" stroke-dasharray="3 3"/><path d="M608.5 77V470" stroke="#778899" stroke-width="1" stroke-dasharray="3 3"/><path d="M640.5 77V470" stroke="#778899" stroke-width="1" stroke-dasharray="3 3"/><path d="M672.5 77V470" stroke="#778899" stroke-width="1" stroke-dasharray="3 3"/><path d="M704.5 77V470" stroke="#778899" stroke-width="1" stroke-dasharray="3 3"/><path d="M736.5 77V470" stroke="#778899" stroke-width="1" stroke-dasharray="3 3"/><path d="M768.5 77V470" stroke="#778899" stroke-width="1" stroke-dasharray="3 3"/><path d="M800.5 77V470" stroke="#778899" stroke-width="1" stroke-dasharray="3 3"/><path d="M832.5 77V470" stroke="#778899" stroke-width="1" stroke-dasharray="3 3"/><path d="M864.5 77V470" stroke="#778899" stroke-width="1" stroke-dasharray="3 3"/><path d="M896.5 77V470" stroke="#778899" stroke-width="1" stroke-dasharray="3 3"/><path d="M928.5 77V470" stroke="#778899" stroke-width="1" stroke-dasharray="3 3"/><path d="M960.5 77V470" stroke="#778899" stroke-width="1" stroke-dasharray="3 3"/><path d="M992.5 77V470" stroke="#778899" stroke-width="1" stroke-dasharray="3 3"/><path d="M1024.5 77V470" stroke="#778899" stroke-width="1" stroke-dasharray="3 3"/><path d="M1056.5 77V470" stroke="#778899" stroke-width="1" stroke-dasharray="3 3"/><path d="M1088.5 77V470" stroke="#778899" stroke-width="1" stroke-dasharray="3 3"/><path d="M1120.5 77V470" stroke="#778899" stroke-width="1" stroke-dasharray="3 3"/><path d="M1152.5 77V470" stroke="#778899" stroke-width="1" stroke-dasharray="3 3"/><path d="M1184.5 77V470" stroke="#778899" stroke-width="1" stroke-dasharray="3 3"/><path d="M1216.5 77V470" stroke="#778899" stroke-width="1" stroke-dasharray="3 3"/><path d="M1248.5 77V470" stroke="#778899" stroke-width="1" stroke-dasharray="3 3"/><path d="M1280.5 77V470" stroke="#778899" stroke-width="1" stroke-dasharray="3 3"/><path d="M1312.5 77V470" stroke="#778899" stroke-width="1" stroke-dasharray="3 3"/><path d="M1344.5 77V470" stroke="#778899" stroke-width="1" stroke-dasharray="3 3"/><path d="M1376.5 77V470" stroke="#778899" stroke-width="1" stroke-dasharray="3 3"/><path d="M288.5 76.5H1387.5V472.5H288.5z" fill="none" stroke="#fff" stroke-width="1"/><path d="M289 98.5H1387" stroke="#778899" stroke-width="1"/><path d="M1388 86.5H1393" stroke="#fff" stroke-width="1"/><path d="M1388 118.5H1393" stroke="#fff" stroke-width="1"/><path d="M1388 151.5H1393" stroke="#fff" stroke-width="1"/><path d="M1388 183.5H1393" stroke="#fff" stroke-width="1"/><path d="M1388 215.5H1393" stroke="#fff" stroke-width="1"/><path d="M1388 247.5H1393" stroke="#fff" stroke-width="1"/><path d="M1388 279.5H1393" stroke="#fff" stroke-width="1"/><path d="M1388 311.5H1393" stroke="#fff" stroke-width="1"/><path d="M1388 343.5H1393" stroke="#fff" stroke-width="1"/><path d="M1388 376.5H1393" stroke="#fff" stroke-width="1"/><path d="M1388 408.5H1393" stroke="#fff" stroke-width="1"/><path d="M1388 440.5H1393" stroke="#fff" stroke-width="1"/><path d="M288.5 473V477" stroke="#fff" stroke-width="1"/><path d="M352.5 473V477" stroke="#fff" stroke-width="1"/><path d="M416.5 473V477" stroke="#fff" stroke-width="1"/><path d="M480.5 473V477" stroke="#fff" stroke-width="1"/><path d="M544.5 473V477" stroke="#fff" stroke-width="1"/><path d="M608.5 473V477" stroke="#fff" stroke-width="1"/><path d="M672.5 473V477" stroke="#fff" stroke-width="1"/><path d="M736.5 473V477" stroke="#fff" stroke-width="1"/><path d="M800.5 473V477" stroke="#fff" stroke-width="1"/><path d="M864.5 473V477" stroke="#fff" stroke-width="1"/><path d="M928.5 473V477" stroke="#fff" stroke-width="1"/><path d="M992.5 473V477" stroke="#fff" stroke-width="1"/><path d="M1056.5 473V477" stroke="#fff" stroke-width="1"/><path d="M1120.5 473V477" stroke="#fff" stroke-width="1"/><path d="M1184.5 473V477" stroke="#fff" stroke-width="1"/><path d="M1248.5 473V477" stroke="#fff" stroke-width="1"/><path d="M1312.5 473V477" stroke="#fff" stroke-width="1"/><path d="M1376.5 473V477" stroke="#fff" stroke-width="1"/></svg>
<div class="t" style="left:1393.6px;top:81.55px;font-size:9.9px;color:#fff;letter-spacing:-0.65px">1.35920</div>
<div class="t" style="left:1393.6px;top:113.55px;font-size:9.9px;color:#fff;letter-spacing:-0.65px">1.35700</div>
<div class="t" style="left:1393.6px;top:146.55px;font-size:9.9px;color:#fff;letter-spacing:-0.65px">1.35480</div>
<div class="t" style="left:1393.6px;top:178.55px;font-size:9.9px;color:#fff;letter-spacing:-0.65px">1.35260</div>
<div class="t" style="left:1393.6px;top:210.55px;font-size:9.9px;color:#fff;letter-spacing:-0.65px">1.35040</div>
<div class="t" style="left:1393.6px;top:242.55px;font-size:9.9px;color:#fff;letter-spacing:-0.65px">1.34820</div>
<div class="t" style="left:1393.6px;top:274.55px;font-size:9.9px;color:#fff;letter-spacing:-0.65px">1.34600</div>
<div class="t" style="left:1393.6px;top:306.55px;font-size:9.9px;color:#fff;letter-spacing:-0.65px">1.34380</div>
<div class="t" style="left:1393.6px;top:338.55px;font-size:9.9px;color:#fff;letter-spacing:-0.65px">1.34160</div>
<div class="t" style="left:1393.6px;top:371.55px;font-size:9.9px;color:#fff;letter-spacing:-0.65px">1.33940</div>
<div class="t" style="left:1393.6px;top:403.55px;font-size:9.9px;color:#fff;letter-spacing:-0.65px">1.33720</div>
<div class="t" style="left:1393.6px;top:435.55px;font-size:9.9px;color:#fff;letter-spacing:-0.65px">1.33500</div>
<div class="a" style="left:1389px;top:92px;width:41px;height:13px;background:#778899;"></div>
<div class="t" style="left:1391px;top:93.55px;font-size:9.9px;color:#dde;letter-spacing:-0.65px">1.35840</div>
<div class="t" style="left:289px;top:477.35px;font-size:9.9px;color:#fff;letter-spacing:-0.45px">1 Sep 2025</div>
<div class="t" style="left:352px;top:477.35px;font-size:9.9px;color:#fff;letter-spacing:-0.45px">2 Sep 05:00</div>
<div class="t" style="left:416px;top:477.35px;font-size:9.9px;color:#fff;letter-spacing:-0.45px">2 Sep 13:00</div>
<div class="t" style="left:480px;top:477.35px;font-size:9.9px;color:#fff;letter-spacing:-0.45px">2 Sep 21:00</div>
<div class="t" style="left:992px;top:477.35px;font-size:9.9px;color:#fff;letter-spacing:-0.45px">5 Sep 13:00</div>
<div class="t" style="left:1056px;top:477.35px;font-size:9.9px;color:#fff;letter-spacing:-0.45px">5 Sep 21:00</div>
<div class="t" style="left:1120px;top:477.35px;font-size:9.9px;color:#fff;letter-spacing:-0.45px">8 Sep 05:00</div>
<div class="t" style="left:1184px;top:477.35px;font-size:9.9px;color:#fff;letter-spacing:-0.45px">8 Sep 13:00</div>
<div class="t" style="left:1248px;top:477.35px;font-size:9.9px;color:#fff;letter-spacing:-0.45px">8 Sep 21:00</div>
<div class="t" style="left:1312px;top:477.35px;font-size:9.9px;color:#fff;letter-spacing:-0.45px">9 Sep 05:00</div>
<div class="t" style="left:1376px;top:477.35px;font-size:9.9px;color:#fff;letter-spacing:-0.45px">9 Sep 13:00</div>
<svg style="left:293px;top:82px;" width="16" height="11" viewBox="0 0 16 11"><rect x="0.5" y="0.5" width="7.5" height="10" fill="#fff" stroke="#e03a2a"/><rect x="7.5" y="0.5" width="7.5" height="10" fill="#fff" stroke="#1f6fba"/><path d="M2 3h5M2 5.5h5M2 8h5" stroke="#e03a2a"/><path d="M9 3h5M9 5.5h5M9 8h5" stroke="#1f6fba"/></svg>
<svg style="left:314px;top:81px;" width="16" height="12" viewBox="0 0 16 12"><path d="M0.5 1.5h2.5v4h3v6H0.5z" fill="#fdd" stroke="#e03a2a"/><path d="M9.5 11.5h5.5V1.5H12.5v5H9.5z" fill="#cfe6f9" stroke="#1f6fba"/><rect x="5" y="1" width="4" height="2" fill="#ddd"/></svg>
<div class="t" style="left:335px;top:82.79px;font-size:9.4px;color:#fff;">GBPUSD, H1:&nbsp; Great Britain Pound vs US Dollar</div>
<div class="t" style="left:1324px;top:82.79px;font-size:9.4px;color:#fff;">PetroMult</div>
<svg style="left:1368px;top:81px;" width="17" height="13" viewBox="0 0 17 13"><path d="M4 6v3.3c2 1.6 7 1.6 9 0V6" fill="#bdbdbd" stroke="#9a9a9a" stroke-width="0.7"/><path d="M0.5 4.5L8.5 0.7 16.5 4.5 8.5 8.3z" fill="#dcdcdc" stroke="#a8a8a8" stroke-width="0.7"/><path d="M2.5 5v6" stroke="#aaa" stroke-width="1"/><circle cx="2.5" cy="11.3" r="1.1" fill="#aaa"/></svg>
<svg style="left:0px;top:0px;pointer-events:none" width="1440" height="500" viewBox="0 0 1440 500"><path d="M289.5 156V160" stroke="#00ff00" stroke-width="1"/><rect x="287.5" y="157" width="4" height="3" fill="#000" stroke="#00ff00" stroke-width="1"/><path d="M296.5 149V158" stroke="#00ff00" stroke-width="1"/><rect x="294.5" y="151" width="4" height="6" fill="#000" stroke="#00ff00" stroke-width="1"/><path d="M304.5 150V155" stroke="#00ff00" stroke-width="1"/><path d="M302.0 152.5H307.0" stroke="#00ff00" stroke-width="2"/><path d="M312.5 156V167" stroke="#00ff00" stroke-width="1"/><rect x="310.5" y="157" width="4" height="9" fill="#fff" stroke="#00ff00" stroke-width="1"/><path d="M320.5 151V166" stroke="#00ff00" stroke-width="1"/><rect x="318.5" y="156" width="4" height="9" fill="#000" stroke="#00ff00" stroke-width="1"/><path d="M328.5 151V158" stroke="#00ff00" stroke-width="1"/><rect x="326.5" y="154" width="4" height="3" fill="#000" stroke="#00ff00" stroke-width="1"/><path d="M336.5 152V170" stroke="#00ff00" stroke-width="1"/><rect x="334.5" y="154" width="4" height="13" fill="#fff" stroke="#00ff00" stroke-width="1"/><path d="M344.5 161V174" stroke="#00ff00" stroke-width="1"/><path d="M342.0 167.5H347.0" stroke="#00ff00" stroke-width="2"/><path d="M352.5 168V188" stroke="#00ff00" stroke-width="1"/><rect x="350.5" y="168" width="4" height="12" fill="#fff" stroke="#00ff00" stroke-width="1"/><path d="M360.5 177V187" stroke="#00ff00" stroke-width="1"/><rect x="358.5" y="179" width="4" height="4" fill="#fff" stroke="#00ff00" stroke-width="1"/><path d="M368.5 176V189" stroke="#00ff00" stroke-width="1"/><path d="M366.0 181.5H371.0" stroke="#00ff00" stroke-width="2"/><path d="M376.5 180V192" stroke="#00ff00" stroke-width="1"/><rect x="374.5" y="181" width="4" height="10" fill="#fff" stroke="#00ff00" stroke-width="1"/><path d="M384.5 172V190" stroke="#00ff00" stroke-width="1"/><rect x="382.5" y="176" width="4" height="14" fill="#000" stroke="#00ff00" stroke-width="1"/><path d="M392.5 174V377" stroke="#00ff00" stroke-width="1"/><rect x="390.5" y="176" width="4" height="187" fill="#fff" stroke="#00ff00" stroke-width="1"/><path d="M400.5 318V403" stroke="#00ff00" stroke-width="1"/><rect x="398.5" y="349" width="4" height="14" fill="#000" stroke="#00ff00" stroke-width="1"/><path d="M408.5 342V396" stroke="#00ff00" stroke-width="1"/><rect x="406.5" y="348" width="4" height="21" fill="#fff" stroke="#00ff00" stroke-width="1"/><path d="M416.5 365V410" stroke="#00ff00" stroke-width="1"/><rect x="414.5" y="367" width="4" height="32" fill="#fff" stroke="#00ff00" stroke-width="1"/><path d="M1040.5 158V186" stroke="#00ff00" stroke-width="1"/><rect x="1038.5" y="161" width="4" height="23" fill="#fff" stroke="#00ff00" stroke-width="1"/><path d="M1048.5 183V205" stroke="#00ff00" stroke-width="1"/><rect x="1046.5" y="184" width="4" height="19" fill="#fff" stroke="#00ff00" stroke-width="1"/><path d="M1056.5 200V221" stroke="#00ff00" stroke-width="1"/><rect x="1054.5" y="203" width="4" height="11" fill="#fff" stroke="#00ff00" stroke-width="1"/><path d="M1064.5 205V220" stroke="#00ff00" stroke-width="1"/><rect x="1062.5" y="214" width="4" height="3" fill="#fff" stroke="#00ff00" stroke-width="1"/><path d="M1072.5 209V219" stroke="#00ff00" stroke-width="1"/><rect x="1070.5" y="212" width="4" height="5" fill="#000" stroke="#00ff00" stroke-width="1"/><path d="M1080.5 219V228" stroke="#00ff00" stroke-width="1"/><path d="M1078.0 224.5H1083.0" stroke="#00ff00" stroke-width="2"/><path d="M1088.5 220V248" stroke="#00ff00" stroke-width="1"/><rect x="1086.5" y="225" width="4" height="17" fill="#fff" stroke="#00ff00" stroke-width="1"/><path d="M1096.5 227V243" stroke="#00ff00" stroke-width="1"/><rect x="1094.5" y="232" width="4" height="9" fill="#000" stroke="#00ff00" stroke-width="1"/><path d="M1104.5 227V247" stroke="#00ff00" stroke-width="1"/><rect x="1102.5" y="227" width="4" height="5" fill="#000" stroke="#00ff00" stroke-width="1"/><path d="M1112.5 217V236" stroke="#00ff00" stroke-width="1"/><rect x="1110.5" y="219" width="4" height="8" fill="#000" stroke="#00ff00" stroke-width="1"/><path d="M1120.5 213V228" stroke="#00ff00" stroke-width="1"/><rect x="1118.5" y="215" width="4" height="4" fill="#000" stroke="#00ff00" stroke-width="1"/><path d="M1128.5 213V230" stroke="#00ff00" stroke-width="1"/><rect x="1126.5" y="216" width="4" height="13" fill="#fff" stroke="#00ff00" stroke-width="1"/><path d="M1136.5 225V242" stroke="#00ff00" stroke-width="1"/><path d="M1134.0 228.0H1139.0" stroke="#00ff00" stroke-width="1.5"/><path d="M1144.5 216V228" stroke="#00ff00" stroke-width="1"/><path d="M1142.0 227.0H1147.0" stroke="#00ff00" stroke-width="1.5"/><path d="M1152.5 194V228" stroke="#00ff00" stroke-width="1"/><rect x="1150.5" y="195" width="4" height="32" fill="#000" stroke="#00ff00" stroke-width="1"/><path d="M1160.5 192V206" stroke="#00ff00" stroke-width="1"/><rect x="1158.5" y="196" width="4" height="3" fill="#fff" stroke="#00ff00" stroke-width="1"/><path d="M1168.5 191V213" stroke="#00ff00" stroke-width="1"/><rect x="1166.5" y="199" width="4" height="4" fill="#fff" stroke="#00ff00" stroke-width="1"/><path d="M1176.5 201V210" stroke="#00ff00" stroke-width="1"/><rect x="1174.5" y="204" width="4" height="4" fill="#fff" stroke="#00ff00" stroke-width="1"/><path d="M1184.5 174V219" stroke="#00ff00" stroke-width="1"/><rect x="1182.5" y="177" width="4" height="31" fill="#000" stroke="#00ff00" stroke-width="1"/><path d="M1192.5 170V190" stroke="#00ff00" stroke-width="1"/><path d="M1190.0 177.5H1195.0" stroke="#00ff00" stroke-width="2"/><path d="M1200.5 150V182" stroke="#00ff00" stroke-width="1"/><rect x="1198.5" y="158" width="4" height="20" fill="#000" stroke="#00ff00" stroke-width="1"/><path d="M1208.5 139V164" stroke="#00ff00" stroke-width="1"/><rect x="1206.5" y="155" width="4" height="3" fill="#000" stroke="#00ff00" stroke-width="1"/><path d="M1216.5 153V177" stroke="#00ff00" stroke-width="1"/><rect x="1214.5" y="155" width="4" height="16" fill="#fff" stroke="#00ff00" stroke-width="1"/><path d="M1224.5 152V174" stroke="#00ff00" stroke-width="1"/><rect x="1222.5" y="154" width="4" height="17" fill="#000" stroke="#00ff00" stroke-width="1"/><path d="M1232.5 152V181" stroke="#00ff00" stroke-width="1"/><rect x="1230.5" y="153" width="4" height="14" fill="#fff" stroke="#00ff00" stroke-width="1"/><path d="M1240.5 162V183" stroke="#00ff00" stroke-width="1"/><rect x="1238.5" y="167" width="4" height="15" fill="#fff" stroke="#00ff00" stroke-width="1"/><path d="M1248.5 143V182" stroke="#00ff00" stroke-width="1"/><rect x="1246.5" y="144" width="4" height="37" fill="#000" stroke="#00ff00" stroke-width="1"/><path d="M1256.5 141V151" stroke="#00ff00" stroke-width="1"/><rect x="1254.5" y="144.5" width="4" height="3.0" fill="#fff" stroke="#00ff00" stroke-width="1"/><path d="M1264.5 147V156" stroke="#00ff00" stroke-width="1"/><rect x="1262.5" y="147" width="4" height="8" fill="#fff" stroke="#00ff00" stroke-width="1"/><path d="M1272.5 155V161" stroke="#00ff00" stroke-width="1"/><rect x="1270.5" y="157" width="4" height="3" fill="#fff" stroke="#00ff00" stroke-width="1"/><path d="M1280.5 149V158" stroke="#00ff00" stroke-width="1"/><rect x="1278.5" y="150" width="4" height="7" fill="#000" stroke="#00ff00" stroke-width="1"/><path d="M1288.5 138V151" stroke="#00ff00" stroke-width="1"/><rect x="1286.5" y="144" width="4" height="6" fill="#000" stroke="#00ff00" stroke-width="1"/><path d="M1296.5 131V145" stroke="#00ff00" stroke-width="1"/><rect x="1294.5" y="136" width="4" height="8" fill="#000" stroke="#00ff00" stroke-width="1"/><path d="M1304.5 118V144" stroke="#00ff00" stroke-width="1"/><rect x="1302.5" y="123" width="4" height="13" fill="#000" stroke="#00ff00" stroke-width="1"/><path d="M1312.5 117V131" stroke="#00ff00" stroke-width="1"/><rect x="1310.5" y="124" width="4" height="4" fill="#fff" stroke="#00ff00" stroke-width="1"/><path d="M1320.5 127V136" stroke="#00ff00" stroke-width="1"/><rect x="1318.5" y="128" width="4" height="7" fill="#fff" stroke="#00ff00" stroke-width="1"/><path d="M1328.5 111V136" stroke="#00ff00" stroke-width="1"/><rect x="1326.5" y="112" width="4" height="23" fill="#000" stroke="#00ff00" stroke-width="1"/><path d="M1336.5 104V118" stroke="#00ff00" stroke-width="1"/><rect x="1334.5" y="105.5" width="4" height="9.0" fill="#000" stroke="#00ff00" stroke-width="1"/><path d="M1344.5 101V138" stroke="#00ff00" stroke-width="1"/><rect x="1342.5" y="104" width="4" height="21.5" fill="#fff" stroke="#00ff00" stroke-width="1"/><path d="M1352.5 110V137" stroke="#00ff00" stroke-width="1"/><path d="M1350.0 124.0H1355.0" stroke="#00ff00" stroke-width="1.5"/><path d="M1360.5 111V137" stroke="#00ff00" stroke-width="1"/><rect x="1358.5" y="114.5" width="4" height="11.5" fill="#000" stroke="#00ff00" stroke-width="1"/><path d="M1368.5 91V124" stroke="#00ff00" stroke-width="1"/><rect x="1366.5" y="94" width="4" height="21.5" fill="#000" stroke="#00ff00" stroke-width="1"/><path d="M1376.5 90V100" stroke="#00ff00" stroke-width="1"/><rect x="1374.5" y="95" width="4" height="3" fill="#000" stroke="#00ff00" stroke-width="1"/><path d="M1169 183L1192 171" stroke="#1f6fba" stroke-width="1" stroke-dasharray="3 3"/><path d="M1168.5 183.5l4.5-4.5h-2.5v-2.5h-4v2.5h-2.5z" fill="#e8502f" stroke="#fff" stroke-width="1" stroke-linejoin="round"/><path d="M1160.5 185.5l4.5 4.5h-2.5v2.5h-4v-2.5h-2.5z" fill="#1f6fd0" stroke="#fff" stroke-width="1" stroke-linejoin="round"/><path d="M1168.5 185.5l4.5 4.5h-2.5v2.5h-4v-2.5h-2.5z" fill="#1f6fd0" stroke="#fff" stroke-width="1" stroke-linejoin="round"/><path d="M1192.5 169.5l4.5-4.5h-2.5v-2.5h-4v2.5h-2.5z" fill="#e8502f" stroke="#fff" stroke-width="1" stroke-linejoin="round"/></svg>
<div class="a" style="left:286px;top:494px;width:1154px;height:24px;background:#f0f0f0;"></div>
<div class="a" style="left:286px;top:494px;width:1px;height:18px;background:#a0a0a0;"></div>
<div class="t" style="left:300.5px;top:497.92px;font-size:11.2px;color:#6d6d6d;">USDCHF,H1</div>
<div class="a" style="left:375px;top:493px;width:48px;height:19px;background:#fff;border:1px solid #000;border-top:none"></div>
<div class="t" style="left:386px;top:497.73px;font-size:11.6px;color:#000;">GBPUSD,H1</div>
<svg style="left:1401px;top:498px;" width="8" height="10" viewBox="0 0 8 10"><path d="M6 1L2 5l4 4z" fill="#bbb"/></svg>
<svg style="left:1421px;top:498px;" width="8" height="10" viewBox="0 0 8 10"><path d="M2 1l4 4-4 4z" fill="#bbb"/></svg>
<div class="a" style="left:0px;top:518px;width:1440px;height:1px;background:#a0a0a0;"></div>
<div class="a" style="left:0px;top:519px;width:16px;height:319px;background:#bfcddb;"></div>
<svg style="left:4px;top:525px;" width="9" height="9" viewBox="0 0 9 9"><path d="M1 1L8 8M8 1L1 8" stroke="#000" stroke-width="1.5"/></svg>
<div class="t" style="left:8px;top:832px;font-size:10.7px;transform-origin:0 0;transform:rotate(-90deg) translate(0,-5.5px)">Тестер стратегий</div>
<div class="a" style="left:16px;top:519px;width:1424px;height:294px;background:#fff;"></div>
<div class="a" style="left:34px;top:536px;width:100px;height:100px;background:#fff;border:1px solid #c8c8c8"></div>
<div class="a" style="left:150px;top:536px;width:100px;height:100px;background:#fff;border:1px solid #c8c8c8"></div>
<div class="a" style="left:266px;top:536px;width:100px;height:100px;background:#fff;border:1px solid #c8c8c8"></div>
<div class="a" style="left:382px;top:536px;width:100px;height:100px;background:#fff;border:1px solid #c8c8c8"></div>
<div class="a" style="left:994px;top:536px;width:100px;height:100px;background:#fff;border:1px solid #c8c8c8"></div>
<div class="a" style="left:1126px;top:536px;width:100px;height:100px;background:#fff;border:1px solid #c8c8c8"></div>
<svg style="left:34px;top:536px;" width="100" height="100" viewBox="0 0 100 100"><rect x="14.5" y="14.5" width="40" height="36" fill="#fff" stroke="#c4c4c4"/><path d="M15 17.5h39" stroke="#ddd"/><path d="M18.5 47V39" stroke="#2f5fe0" stroke-width="1"/><path d="M20.5 47V37" stroke="#f0503a" stroke-width="1"/><path d="M24.5 47V31" stroke="#2f5fe0" stroke-width="1"/><path d="M26.5 47V27" stroke="#f0503a" stroke-width="1"/><path d="M30.5 47V22" stroke="#2f5fe0" stroke-width="1"/><path d="M32.5 47V20" stroke="#f0503a" stroke-width="1"/><path d="M36.5 47V25" stroke="#2f5fe0" stroke-width="1"/><path d="M38.5 47V23" stroke="#f0503a" stroke-width="1"/><path d="M42.5 47V36" stroke="#2f5fe0" stroke-width="1"/><path d="M44.5 47V32" stroke="#f0503a" stroke-width="1"/><path d="M48.5 47V40" stroke="#2f5fe0" stroke-width="1"/><path d="M50.5 47V38" stroke="#f0503a" stroke-width="1"/><path d="M14 73.5C18 74 20 77 23 76.5S28 70 31 69.5 38 69.5 40 68.5 42 62 44 60 52 57 53 54.5 54 48 55 46 58 41 59 39.5 64 38.5 65 38 67 30 68 28.5 75 27 77 26 83 21.5 85 20.5" fill="none" stroke="#2f5fe0" stroke-width="2"/><path d="M14 67.5C17 68 19 71 22 71S27 65 29 65 35 66.5 37 66 39 58.5 41 57.5 47 56 48 55 50 47 51 46 55 45 56 44 59 34 60 33 68 31 69 30 71 23 73 22 78 21 79 20 84 16 85 15.5" fill="none" stroke="#1fa83a" stroke-width="2.2"/><rect x="39.5" y="65.5" width="46" height="20" fill="#fff" stroke="#c4c4c4"/><path d="M40 68.5h45" stroke="#ddd"/><path d="M43.0 82V75" stroke="#1fa83a" stroke-width="1"/><path d="M45.5 82V73" stroke="#1fa83a" stroke-width="1"/><path d="M49.0 82V75" stroke="#1fa83a" stroke-width="1"/><path d="M51.5 82V73" stroke="#1fa83a" stroke-width="1"/><path d="M55.0 82V75" stroke="#1fa83a" stroke-width="1"/><path d="M57.5 82V73" stroke="#1fa83a" stroke-width="1"/><path d="M61.0 82V75" stroke="#1fa83a" stroke-width="1"/><path d="M63.5 82V73" stroke="#1fa83a" stroke-width="1"/><path d="M67.0 82V75" stroke="#1fa83a" stroke-width="1"/><path d="M69.5 82V73" stroke="#1fa83a" stroke-width="1"/><path d="M73.0 82V75" stroke="#1fa83a" stroke-width="1"/><path d="M75.5 82V73" stroke="#1fa83a" stroke-width="1"/><path d="M79.0 82V75" stroke="#1fa83a" stroke-width="1"/><path d="M81.5 82V73" stroke="#1fa83a" stroke-width="1"/></svg>
<svg style="left:150px;top:536px;" width="100" height="100" viewBox="0 0 100 100"><path d="M18.5 40V65" stroke="#3a4350" stroke-width="1"/><rect x="16.5" y="47.5" width="4" height="11.0" fill="#fff" stroke="#3a4350" stroke-width="1"/><path d="M27.5 48V68" stroke="#3a4350" stroke-width="1"/><rect x="25.5" y="55" width="4" height="7" fill="#3a4350" stroke="#3a4350" stroke-width="1"/><path d="M36.5 47V73" stroke="#3a4350" stroke-width="1"/><rect x="34.5" y="61" width="4" height="5" fill="#3a4350" stroke="#3a4350" stroke-width="1"/><path d="M45.5 44V70" stroke="#3a4350" stroke-width="1"/><rect x="43.5" y="49" width="4" height="9" fill="#fff" stroke="#3a4350" stroke-width="1"/><path d="M54.5 30V55" stroke="#3a4350" stroke-width="1"/><rect x="52.5" y="35.5" width="4" height="13.5" fill="#fff" stroke="#3a4350" stroke-width="1"/><path d="M63.5 31V52" stroke="#3a4350" stroke-width="1"/><rect x="61.5" y="38" width="4" height="7.5" fill="#3a4350" stroke="#3a4350" stroke-width="1"/><path d="M72.5 20V46" stroke="#3a4350" stroke-width="1"/><rect x="70.5" y="23.5" width="4" height="18.0" fill="#fff" stroke="#3a4350" stroke-width="1"/><path d="M81.5 16V45" stroke="#3a4350" stroke-width="1"/><rect x="79.5" y="20" width="4" height="18.5" fill="#fff" stroke="#3a4350" stroke-width="1"/><path d="M14 59C17 60 19 63 21 63S25 58 27 57.5 32 59.5 34 59.5 38 53 40 52.5 44 52 46 52 49 45 51 44.5 55 43 57 43 60 35 62 34.5 65 34 67 34 71 27 73 26.5 77 28.5 79 28.5 84 24 85.5 23.5" fill="none" stroke="#1fa83a" stroke-width="2.2"/><path d="M15.5 86V77" stroke="#111" stroke-width="1"/><path d="M18.5 86V78" stroke="#111" stroke-width="1"/><path d="M21.5 86V80" stroke="#111" stroke-width="1"/><path d="M24.5 86V83" stroke="#111" stroke-width="1"/><path d="M27.5 86V82" stroke="#111" stroke-width="1"/><path d="M30.5 86V79" stroke="#111" stroke-width="1"/><path d="M33.5 86V77" stroke="#111" stroke-width="1"/><path d="M36.5 86V77" stroke="#111" stroke-width="1"/><path d="M39.5 86V77" stroke="#111" stroke-width="1"/><path d="M42.5 86V80" stroke="#111" stroke-width="1"/><path d="M45.5 86V76" stroke="#111" stroke-width="1"/><path d="M48.5 86V71" stroke="#111" stroke-width="1"/><path d="M51.5 86V68" stroke="#111" stroke-width="1"/><path d="M54.5 86V68" stroke="#111" stroke-width="1"/><path d="M57.5 86V70" stroke="#111" stroke-width="1"/><path d="M60.5 86V72" stroke="#111" stroke-width="1"/><path d="M63.5 86V74" stroke="#111" stroke-width="1"/><path d="M66.5 86V72" stroke="#111" stroke-width="1"/><path d="M69.5 86V67" stroke="#111" stroke-width="1"/><path d="M72.5 86V65" stroke="#111" stroke-width="1"/><path d="M75.5 86V64" stroke="#111" stroke-width="1"/><path d="M78.5 86V63" stroke="#111" stroke-width="1"/><path d="M14 80C20 82 24 84 27 84S34 78 38 77 46 78 50 78 56 71 60 70 68 71 72 70 82 66 85 64" fill="none" stroke="#1fa83a" stroke-width="1.2" stroke-dasharray="3 2.5"/></svg>
<svg style="left:266px;top:536px;" width="100" height="100" viewBox="0 0 100 100"><path d="M18.5 41V67" stroke="#3a4350" stroke-width="1"/><rect x="16.5" y="48" width="4" height="11.5" fill="#fff" stroke="#3a4350" stroke-width="1"/><path d="M27.5 49V69" stroke="#3a4350" stroke-width="1"/><rect x="25.5" y="55" width="4" height="9" fill="#3a4350" stroke="#3a4350" stroke-width="1"/><path d="M36.5 48V74" stroke="#3a4350" stroke-width="1"/><rect x="34.5" y="53" width="4" height="14.5" fill="#3a4350" stroke="#3a4350" stroke-width="1"/><path d="M45.5 45V71" stroke="#3a4350" stroke-width="1"/><rect x="43.5" y="49" width="4" height="12.5" fill="#fff" stroke="#3a4350" stroke-width="1"/><path d="M54.5 31V56" stroke="#3a4350" stroke-width="1"/><rect x="52.5" y="36" width="4" height="14.5" fill="#fff" stroke="#3a4350" stroke-width="1"/><path d="M63.5 32V53" stroke="#3a4350" stroke-width="1"/><rect x="61.5" y="38" width="4" height="8.5" fill="#3a4350" stroke="#3a4350" stroke-width="1"/><path d="M72.5 21V47" stroke="#3a4350" stroke-width="1"/><rect x="70.5" y="24" width="4" height="18.5" fill="#fff" stroke="#3a4350" stroke-width="1"/><path d="M81.5 17V46" stroke="#3a4350" stroke-width="1"/><rect x="79.5" y="21" width="4" height="18.5" fill="#fff" stroke="#3a4350" stroke-width="1"/><path d="M42.5 22h6v7h3.5l-6.5 7-6.5-7h3.5z" fill="#f5583f"/><path d="M27.5 72l6.5 7h-3.5v7h-6v-7H21z" fill="#0b4ee0"/><path d="M72.5 50l6.5 7h-3.5v7h-6v-7H66z" fill="#0b4ee0"/></svg>
<svg style="left:382px;top:536px;" width="40" height="100" viewBox="0 0 40 100"><circle cx="24.2" cy="42.5" r="7.8" fill="none" stroke="#6a6a6a" stroke-width="2"/><path d="M24.2 34.5v-3M20.5 31h7.5M30 33l2 2" stroke="#6a6a6a" stroke-width="2"/><path d="M19 43a5.5 5.5 0 0 1 4-5" fill="none" stroke="#f0503a" stroke-width="1"/><path d="M23.5 43l4-4.5" stroke="#f0503a" stroke-width="1.6"/><path d="M21 55v9M27 55v9" stroke="#2f5fe0" stroke-width="1.1" stroke-dasharray="2 1.6"/><path d="M17.5 62.5l6.5 6.5 6.5-6.5" fill="none" stroke="#2f5fe0" stroke-width="1.2"/><path d="M14 72C18 73 21 75 24 74S30 69 33 69 38 67 40 64" fill="none" stroke="#1fa83a" stroke-width="2"/><path d="M14 77C18 78 21 80 24 79S30 74 33 74 38 73 40 72" fill="none" stroke="#2f5fe0" stroke-width="2"/></svg>
<svg style="left:1034px;top:536px;" width="58" height="100" viewBox="0 0 58 100"><path d="M2 24.0C6 24.0 7 42.0 11 42.0S18 33.0 22.5 33.0S36 64.0 44 68" fill="none" stroke="#3a70e8" stroke-width="0.8"/><path d="M2 27.4C6 27.4 7 43.7 11 43.7S18 35.8 22.5 35.8S36 64.3 44 68" fill="none" stroke="#4474e0" stroke-width="0.8"/><path d="M2 30.8C6 30.8 7 45.4 11 45.4S18 38.5 22.5 38.5S36 64.6 44 68" fill="none" stroke="#4f79d8" stroke-width="0.8"/><path d="M2 34.2C6 34.2 7 47.1 11 47.1S18 41.2 22.5 41.2S36 64.9 44 68" fill="none" stroke="#5b7fd0" stroke-width="0.8"/><path d="M2 37.6C6 37.6 7 48.8 11 48.8S18 44.0 22.5 44.0S36 65.2 44 68" fill="none" stroke="#6886c6" stroke-width="0.8"/><path d="M2 41.0C6 41.0 7 50.5 11 50.5S18 46.8 22.5 46.8S36 65.5 44 68" fill="none" stroke="#768dbc" stroke-width="0.8"/><path d="M2 44.4C6 44.4 7 52.2 11 52.2S18 49.5 22.5 49.5S36 65.8 44 68" fill="none" stroke="#8595b2" stroke-width="0.8"/><path d="M2 47.8C6 47.8 7 53.9 11 53.9S18 52.2 22.5 52.2S36 66.1 44 68" fill="none" stroke="#949da8" stroke-width="0.8"/><path d="M2 51.2C6 51.2 7 55.6 11 55.6S18 55.0 22.5 55.0S36 66.4 44 68" fill="none" stroke="#a3a6a6" stroke-width="0.8"/><path d="M2 54.6C6 54.6 7 57.3 11 57.3S18 57.8 22.5 57.8S36 66.7 44 68" fill="none" stroke="#b0b0b0" stroke-width="0.8"/><path d="M2 68H44" stroke="#c0c0c0" stroke-width="0.8"/><path d="M2 71C8 71 12 72 18 71.0 S26 70 30 69" fill="none" stroke="#f07868" stroke-width="0.7"/><path d="M2 73C8 73 12 74 18 72.5 S26 70 30 69" fill="none" stroke="#f07868" stroke-width="0.7"/><path d="M2 75C8 75 12 76 18 74.0 S26 70 30 69" fill="none" stroke="#f07868" stroke-width="0.7"/><path d="M2 77C8 77 12 78 18 75.5 S26 70 30 69" fill="none" stroke="#f07868" stroke-width="0.7"/><path d="M2 79C8 79 12 80 18 77.0 S26 70 30 69" fill="none" stroke="#f07868" stroke-width="0.7"/><path d="M2 81C8 81 12 82 18 78.5 S26 70 30 69" fill="none" stroke="#f07868" stroke-width="0.7"/><path d="M2 83C8 83 12 84 18 80.0 S26 70 30 69" fill="none" stroke="#f07868" stroke-width="0.7"/></svg>
<svg style="left:1126px;top:536px;" width="100" height="100" viewBox="0 0 100 100"><path d="M35 49A11.5 11.5 0 0 1 58 46" fill="none" stroke="#1f50e0" stroke-width="2"/><path d="M28.4 48.4h13.6L35 55z" fill="#1f50e0"/><path d="M50 65V46h6l1.5-1.5H73V65z" fill="#fff" stroke="#333d48" stroke-width="1"/><path d="M53 48.5h17" stroke="#333d48" stroke-width="1"/><path d="M46.5 52.5h21L71.5 65H50z" fill="#fff" stroke="#333d48" stroke-width="1"/></svg>
<div class="t" style="left:-216px;width:600px;text-align:center;top:647.98px;font-size:13.8px;color:#000;letter-spacing:0.35px">Одиночный</div>
<div class="t" style="left:-100px;width:600px;text-align:center;top:647.98px;font-size:13.8px;color:#000;letter-spacing:0.35px">Индикатор</div>
<div class="t" style="left:16px;width:600px;text-align:center;top:647.98px;font-size:13.8px;color:#000;letter-spacing:0.35px">Визуализация</div>
<div class="t" style="left:876px;width:600px;text-align:center;top:647.98px;font-size:13.8px;color:#000;letter-spacing:0.35px">Предыдущие</div>
<div class="t" style="left:876px;width:600px;text-align:center;top:663.78px;font-size:13.8px;color:#000;letter-spacing:0.35px">результаты</div>
<div class="t" style="left:387.3px;top:647.98px;font-size:13.8px;color:#000;letter-spacing:0.35px">Стрес</div>
<div class="t" style="left:391.7px;top:663.78px;font-size:13.8px;color:#000;letter-spacing:0.35px">заде</div>
<div class="t" style="right:372.5999999999999px;top:647.98px;font-size:13.8px;color:#000;letter-spacing:0.35px">Расчет</div>
<div class="t" style="right:357.20000000000005px;top:663.78px;font-size:13.8px;color:#000;letter-spacing:0.35px">математики</div>
<div class="a" style="left:34px;top:703px;width:400px;height:22px;background:#fff;border:1px solid #7a7a7a"></div>
<div class="t" style="left:38.8px;top:706.97px;font-size:13.6px;color:#444;">поиск в предыдущих тестах</div>
<svg style="left:35px;top:734.3px;" width="16" height="16" viewBox="0 0 16 16"><path d="M0 1h4.8L2.4 4z" fill="#f0503a"/><path d="M2.5 5.5v10M7.5 3.5v11.5M12.5 0.5v11.5" stroke="#3a4350" stroke-width="1"/><rect x="1" y="7.7" width="3" height="3.5" fill="#3a4350"/><rect x="6" y="6.7" width="3" height="5" fill="#3a4350"/><rect x="11" y="2.7" width="3" height="6" fill="#3a4350"/><path d="M10 15.5h5l-2.5-3.8z" fill="#1f50e0"/></svg>
<svg style="left:35px;top:755.3px;" width="16" height="16" viewBox="0 0 16 16"><path d="M0 1h4.8L2.4 4z" fill="#f0503a"/><path d="M2.5 5.5v10M7.5 3.5v11.5M12.5 0.5v11.5" stroke="#3a4350" stroke-width="1"/><rect x="1" y="7.7" width="3" height="3.5" fill="#3a4350"/><rect x="6" y="6.7" width="3" height="5" fill="#3a4350"/><rect x="11" y="2.7" width="3" height="6" fill="#3a4350"/><path d="M10 15.5h5l-2.5-3.8z" fill="#1f50e0"/></svg>
<svg style="left:35px;top:776.3px;" width="16" height="16" viewBox="0 0 16 16"><path d="M0 1h4.8L2.4 4z" fill="#f0503a"/><path d="M2.5 5.5v10M7.5 3.5v11.5M12.5 0.5v11.5" stroke="#3a4350" stroke-width="1"/><rect x="1" y="7.7" width="3" height="3.5" fill="#3a4350"/><rect x="6" y="6.7" width="3" height="5" fill="#3a4350"/><rect x="11" y="2.7" width="3" height="6" fill="#3a4350"/><path d="M10 15.5h5l-2.5-3.8z" fill="#1f50e0"/></svg>
<div class="a" style="left:50px;top:730px;width:372px;height:70px;overflow:hidden">
<div class="t" style="left:8px;top:5.6px;font-size:14px;color:#1f5fb0">Визуальный тест советника: Petro, EURUSD H1, ohlc на m</div>
<div class="t" style="left:8px;top:26.6px;font-size:14px;color:#1f5fb0">Визуальный тест советника: Petro, EURUSD H1, цены от</div>
<div class="t" style="left:8px;top:47.6px;font-size:14px;color:#1f5fb0">Визуальный тест советника: Petro, EURUSD H1, ohlc на m</div>
</div>
<div class="a" style="left:1423px;top:519px;width:17px;height:294px;background:#f0f0f0;"></div>
<svg style="left:1427px;top:525px;" width="10" height="7" viewBox="0 0 10 7"><path d="M1.6 5.3L5 1.9 8.4 5.3" fill="none" stroke="#505050" stroke-width="2"/></svg>
<div class="a" style="left:1424px;top:536px;width:15px;height:209px;background:#cdcdcd;"></div>
<svg style="left:1427px;top:799px;" width="10" height="7" viewBox="0 0 10 7"><path d="M1.6 1.7L5 5.1 8.4 1.7" fill="none" stroke="#505050" stroke-width="2"/></svg>
<div class="a" style="left:16px;top:813px;width:1424px;height:26px;background:#f0f0f0;"></div>
<div class="a" style="left:18px;top:813px;width:1422px;height:1px;background:#000;"></div>
<div class="a" style="left:23px;top:813px;width:55px;height:20px;background:#fff;border:1px solid #000;border-top:none"></div>
<div class="t" style="left:33.5px;top:817.73px;font-size:11.6px;color:#000;">Обзор</div>
<div class="t" style="left:88px;top:817.73px;font-size:11.6px;color:#6d6d6d;">Агенты</div>
<div class="a" style="left:138px;top:817px;width:1px;height:14px;background:#6d6d6d;"></div>
<div class="t" style="left:148px;top:817.73px;font-size:11.6px;color:#6d6d6d;">Журнал</div>
<svg style="left:1131px;top:818px;" width="14" height="16" viewBox="0 0 14 16"><path d="M4.5 5V3.5a2.5 2.5 0 0 1 5 0V5" fill="none" stroke="#d6a000" stroke-width="1.1"/><path d="M1 5.5h12l0.6 9.5H0.4z" fill="#fad000" stroke="#d6a000" stroke-width="1"/></svg>
<div class="t" style="left:1149.5px;top:820.54px;font-size:11.8px;color:#000;">Маркет</div>
<svg style="left:1201px;top:820px;" width="18" height="12" viewBox="0 0 18 12"><circle cx="9" cy="6" r="1.6" fill="none" stroke="#1f6fba" stroke-width="1.1"/><path d="M5.5 2.5a5 5 0 0 0 0 7M12.5 2.5a5 5 0 0 1 0 7M2.5 0.8a8 8 0 0 0 0 10.4M15.5 0.8a8 8 0 0 1 0 10.4" fill="none" stroke="#1f6fba" stroke-width="1.1"/></svg>
<div class="t" style="left:1222px;top:820.54px;font-size:11.8px;color:#000;">Сигналы</div>
<svg style="left:1283px;top:818px;" width="18" height="17" viewBox="0 0 18 17"><path d="M4.5 10a3 3 0 0 1-0.3-6 4.5 4.5 0 0 1 8.5-0.8 3.2 3.2 0 0 1 1.8 6.8z" fill="#cfe6f9" stroke="#1f6fba" stroke-width="1.1"/><path d="M9 10v3.5M1.5 13.5h15" stroke="#1f6fba" stroke-width="1.1"/><circle cx="9" cy="13.5" r="1" fill="#1f6fba"/></svg>
<div class="t" style="left:1303px;top:820.54px;font-size:11.8px;color:#000;">VPS</div>
<svg style="left:1335px;top:817px;" width="17" height="18" viewBox="0 0 17 18"><rect x="1" y="1" width="15" height="16" rx="2" fill="#fff" stroke="#1f6fba" stroke-width="1.2"/><path d="M1.6 10h13.8v6.4H1.6z" fill="#fad000"/><path d="M4 13.5h3M9 13.5h3" stroke="#333" stroke-width="1"/></svg>
<div class="t" style="left:1355px;top:820.54px;font-size:11.8px;color:#000;">Инструменты</div>
<div class="a" style="left:0px;top:838px;width:1440px;height:1px;background:#a0a0a0;"></div>
<div class="a" style="left:0px;top:839px;width:1440px;height:21px;background:#f0f0f0;"></div>
<div class="t" style="left:2px;top:844.38px;font-size:11.7px;color:#000;">Для вызова справки нажмите F1</div>
<div class="a" style="left:729px;top:841px;width:1px;height:18px;background:#a0a0a0;"></div>
<div class="a" style="left:875px;top:841px;width:1px;height:18px;background:#a0a0a0;"></div>
<div class="a" style="left:973px;top:841px;width:1px;height:18px;background:#a0a0a0;"></div>
<div class="a" style="left:1044px;top:841px;width:1px;height:18px;background:#a0a0a0;"></div>
<div class="a" style="left:1115px;top:841px;width:1px;height:18px;background:#a0a0a0;"></div>
<div class="a" style="left:1183px;top:841px;width:1px;height:18px;background:#a0a0a0;"></div>
<div class="a" style="left:1253px;top:841px;width:1px;height:18px;background:#a0a0a0;"></div>
<div class="a" style="left:1319px;top:841px;width:1px;height:18px;background:#a0a0a0;"></div>
<div class="t" style="left:735.5px;top:844.38px;font-size:11.7px;color:#000;">Default</div>
<svg style="left:1324px;top:842px;" width="16" height="14" viewBox="0 0 16 14"><path d="M1.5 13v-2M4.5 13v-4M7.5 13v-6M10.5 13v-8M13.5 13v-10" stroke="#1fb53a" stroke-width="2"/></svg>
<div class="t" style="left:1345px;top:844.38px;font-size:11.7px;color:#000;">18 / 5 Kb</div>
<div class="a" style="left:0;top:860px;width:1440px;height:40px;background:linear-gradient(90deg,#bcc0ac 0px,#c0bfa8 48px,#d0bfb1 400px,#cebdb0 600px,#c8b8a8 736px,#c9bb98 780px,#b5b596 850px,#aeae9a 890px,#b4aa9e 920px,#c2c294 990px,#c5c890 1025px,#c4bc9e 1060px,#beb09e 1100px,#c0b0a2 1160px,#c8b8a8 1200px,#d8c8b6 1300px,#dccfc0 1440px)"></div>
<svg style="left:16px;top:872px;" width="17" height="17" viewBox="0 0 17 17"><path d="M0 2.3L7 1.3v6.4H0zM8 1.2L16.5 0v7.7H8zM0 8.7h7v6.5L0 14.2zM8 8.7h8.5v7.8L8 15.3z" fill="#000"/></svg>
<div class="a" style="left:48px;top:860px;width:343px;height:40px;background:#fff;"></div>
<svg style="left:59px;top:869px;" width="18" height="18" viewBox="0 0 18 18"><circle cx="11" cy="7" r="5.5" fill="none" stroke="#000" stroke-width="1.3"/><path d="M7 11L1 17" stroke="#000" stroke-width="1.5"/></svg>
<div class="t" style="left:88px;top:873.05px;font-size:15.1px;color:#333;">Чтобы начать поиск, введите здесь запрос</div>
<svg style="left:407px;top:871px;" width="18" height="17" viewBox="0 0 18 17"><path d="M1.8 1v2.8H11.2V1M1.8 15.8V13.2H11.2V15.8M15.4 1v2.5M15.4 9.5v6.3" fill="none" stroke="#000" stroke-width="1.1"/><rect x="1.8" y="5.7" width="9.4" height="5.9" fill="none" stroke="#000" stroke-width="1.1"/><rect x="14.3" y="5.2" width="2.5" height="2.6" fill="#000"/></svg>
<svg style="left:454px;top:867px;" width="26" height="26" viewBox="0 0 26 26"><defs><linearGradient id="eg" x1="0" y1="1" x2="1" y2="0"><stop offset="0" stop-color="#0c59a8"/><stop offset="0.6" stop-color="#1a9ad8"/><stop offset="1" stop-color="#5ed35a"/></linearGradient></defs><path d="M13 1a12 12 0 0 1 12 11c0 4-3 6-6 6-3 0-5-1.5-5-3 0-1 1-1.5 1-2.5 0-2.5-3-4.5-6.5-4.5C4 8 1 11 1 14 1 8 6 1 13 1z" fill="url(#eg)"/><path d="M1 14c0 6 5 11 12 11 4 0 8-2 10-5-2 1-4 1.5-6 1.5-5 0-10-3-10-8 0-2 1-3.5 2-4C5 9 1 10.5 1 14z" fill="#0f6cc0"/></svg>
<svg style="left:504px;top:870px;" width="24" height="20" viewBox="0 0 24 20"><path d="M1 3h8l2 2h12v14H1z" fill="#f4c34a"/><path d="M1 7h22v12H1z" fill="#ffd95a"/><path d="M8 12h8v7h-2.5v-4h-3v4H8z" fill="#1f6fd0"/></svg>
<svg style="left:552px;top:867px;" width="26" height="26" viewBox="0 0 26 26"><circle cx="13" cy="13" r="12.5" fill="#fff"/><path d="M8 6l5 8M18 6l-5 8v8" fill="none" stroke="#f5402c" stroke-width="3"/></svg>
<div class="a" style="left:602px;top:868px;width:24px;height:24px;background:#fff;"></div>
<svg style="left:602px;top:868px;" width="24" height="24" viewBox="0 0 24 24"><circle cx="12" cy="10" r="8" fill="#1b2a48"/><rect x="6" y="8" width="12" height="4" rx="2" fill="#fff"/><circle cx="9.5" cy="10" r="1" fill="#1b2a48"/><circle cx="14.5" cy="10" r="1" fill="#1b2a48"/><path d="M6 17c3 5 9 5 12 0z" fill="#5fb85a"/></svg>
<svg style="left:652px;top:868px;" width="22" height="24" viewBox="0 0 22 24"><path d="M3 3l12-3v20l-12 3z" fill="#c99a16"/><path d="M15 4h6v15h-6z" fill="#f5cf33"/><path d="M3 3l2 1v19l-2 0z" fill="#a87a10"/><text x="9" y="14" font-family="Liberation Sans" font-weight="bold" font-size="11" fill="#fff" text-anchor="middle">5</text></svg>
<div class="a" style="left:688px;top:860px;width:48px;height:40px;background:#e8dfd8;"></div>
<svg style="left:700px;top:868px;" width="24" height="24" viewBox="0 0 24 24"><rect x="0" y="0" width="24" height="24" rx="1" fill="#1d4e8f"/><path d="M4.4 4.5H16.8A4.35 4.8 0 0 1 16.8 14.2H10.5V11.2H16.5A1.5 1.65 0 0 0 16.5 7.7H7.7V19.5H4.4z" fill="#fff"/><rect x="10.5" y="17" width="6.9" height="2.5" fill="#fff"/></svg>
<div class="a" style="left:545px;top:898px;width:40px;height:2px;background:#1f6fd0;"></div>
<div class="a" style="left:594px;top:898px;width:40px;height:2px;background:#1f6fd0;"></div>
<div class="a" style="left:643px;top:898px;width:40px;height:2px;background:#1f6fd0;"></div>
<div class="a" style="left:688px;top:898px;width:48px;height:2px;background:#1f6fd0;"></div>
<svg style="left:1163px;top:873px;" width="12" height="8" viewBox="0 0 12 8"><path d="M1 7l5-5.5 5 5.5" fill="none" stroke="#000" stroke-width="1.3"/></svg>
<svg style="left:1184px;top:872px;" width="17" height="17" viewBox="0 0 17 17"><circle cx="8.5" cy="8.5" r="8" fill="#f5d000"/><path d="M8.5 1a7.5 7.5 0 0 1 7.5 7.5" fill="none" stroke="#2a9a2a" stroke-width="2"/><path d="M1 8.5A7.5 7.5 0 0 0 8.5 16" fill="none" stroke="#2a9a2a" stroke-width="2"/><path d="M8.5 4.5v8M4.5 8.5h8" stroke="#2a9a2a" stroke-width="2.2"/></svg>
<svg style="left:1209px;top:872px;" width="17" height="16" viewBox="0 0 17 16"><path d="M1 5.5h3l4-4v13l-4-4H1z" fill="none" stroke="#000" stroke-width="1.1"/><path d="M10.5 5.5a3 3 0 0 1 0 5M12.5 3.5a6 6 0 0 1 0 9M14.5 1.5a9 9 0 0 1 0 13" fill="none" stroke="#000" stroke-width="1.1"/></svg>
<svg style="left:1232px;top:872px;" width="18" height="16" viewBox="0 0 18 16"><rect x="3.5" y="3.5" width="13" height="9" fill="none" stroke="#000" stroke-width="1.1"/><path d="M10 12.5v3M6 15.5h8" stroke="#000" stroke-width="1.1"/><rect x="0.5" y="0.5" width="5" height="6" fill="#fff" stroke="#000" stroke-width="1"/></svg>
<svg style="left:1256px;top:873px;" width="24" height="14" viewBox="0 0 24 14"><rect x="0.5" y="0.5" width="23" height="13" rx="1" fill="none" stroke="#000" stroke-width="1.1"/><path d="M3 4h18M3 7h18M6 10h12" stroke="#000" stroke-width="1.2" stroke-dasharray="1.3 0.9"/></svg>
<div class="t" style="left:1292.5px;top:874.38px;font-size:11.3px;color:#000;">РУС</div>
<div class="t" style="left:1054px;width:600px;text-align:center;top:865.18px;font-size:11.3px;color:#000;">14:10</div>
<div class="t" style="left:1054px;width:600px;text-align:center;top:883.18px;font-size:11.3px;color:#000;">09.09.2025</div>
<div class="a" style="left:1435px;top:860px;width:1px;height:40px;background:#c0b0a0;"></div>
<svg style="left:1398px;top:871px;" width="19" height="18" viewBox="0 0 19 18"><path d="M1.5 1.5h16v11H9l-4 4v-4H1.5z" fill="none" stroke="#000" stroke-width="1.2"/></svg>
<div class="a" style="left:421px;top:103px;width:615px;height:731px;box-shadow:2px 3px 12px rgba(0,0,0,0.35)"></div>
<div class="a" style="left:421px;top:103px;width:615px;height:731px;background:#f0f0f0;border:1px solid #6b6b6b;border-top-color:#555"></div>
<div class="a" style="left:422px;top:104px;width:613px;height:30px;background:#fff;"></div>
<div class="t" style="left:430.5px;top:112.94px;font-size:11.8px;color:#000;">PetroMult 1.00</div>
<div class="a" style="left:916px;top:118px;width:10px;height:1px;background:#000;"></div>
<div class="a" style="left:961px;top:113px;width:10px;height:10px;background:transparent;border:1px solid #c6c6c6"></div>
<svg style="left:1006px;top:113px;" width="12" height="12" viewBox="0 0 12 12"><path d="M1 1L11 11M11 1L1 11" stroke="#000" stroke-width="1"/></svg>
<div class="a" style="left:428px;top:141px;width:602px;height:656px;background:#fff;"></div>
<div class="t" style="left:435.5px;top:145.12px;font-size:10.8px;color:#000;">Общие</div>
<div class="t" style="left:482.5px;top:145.12px;font-size:10.8px;color:#000;">Входные параметры</div>
<div class="a" style="left:483px;top:159px;width:104px;height:2px;background:#0064c8;"></div>
<div class="a" style="left:440px;top:171px;width:465px;height:611px;background:#fff;border:1px solid #828790"></div>
<div class="t" style="left:447px;top:180.12px;font-size:10.8px;color:#000;">Переменная</div>
<div class="t" style="left:669px;top:180.12px;font-size:10.8px;color:#000;">Значение</div>
<div class="a" style="left:663px;top:174px;width:1px;height:22px;background:#d9d9d9;"></div>
<div class="a" style="left:441px;top:197px;width:445px;height:584px;overflow:hidden">
<div class="a" style="left:0;top:0px;width:445px;height:20px;background:#fff"></div>
<div class="a" style="left:222px;top:0px;width:1px;height:20px;background:#cdcdcd"></div>
<div class="t" style="left:4px;top:4.8px;font-size:11.2px">---<span style="letter-spacing:1px">&gt;&gt;&gt;</span> Symbol 1 Inputs <span style="letter-spacing:1px">&lt;&lt;&lt;</span>---</div>
<div class="a" style="left:0;top:20px;width:445px;height:20px;background:#ebebeb"></div>
<div class="a" style="left:0;top:19px;width:445px;height:1px;background:#cdcdcd"></div>
<div class="a" style="left:222px;top:20px;width:1px;height:20px;background:#cdcdcd"></div>
<div class="t" style="left:4.5px;top:23.5px;font-size:11.5px;color:#c8922e">ab</div>
<div class="t" style="left:22px;top:24.8px;font-size:10.8px">1-й символ</div>
<div class="t" style="left:225px;top:24.8px;font-size:10.8px">EURUSD</div>
<div class="a" style="left:0;top:40px;width:445px;height:20px;background:#fff"></div>
<div class="a" style="left:0;top:39px;width:445px;height:1px;background:#cdcdcd"></div>
<div class="a" style="left:222px;top:40px;width:1px;height:20px;background:#cdcdcd"></div>
<svg style="left:4px;top:42px" width="14" height="14"><path d="M1.2 2.2L3 1V6" fill="none" stroke="#1e64a8" stroke-width="1.2"/><path d="M3.2 12L9.8 1" stroke="#1e64a8" stroke-width="1.2"/><path d="M7.9 8.6c0.3-1.1 1.2-1.5 2-1.5 1 0 1.9 0.6 1.9 1.5 0 1.1-1.4 1.8-3.7 3.3h3.9" fill="none" stroke="#1e64a8" stroke-width="1.2"/></svg>
<div class="t" style="left:22px;top:44.8px;font-size:10.8px">лот 1</div>
<div class="t" style="left:225px;top:44.8px;font-size:10.8px">0.1</div>
<div class="a" style="left:0;top:60px;width:445px;height:20px;background:#ebebeb"></div>
<div class="a" style="left:0;top:59px;width:445px;height:1px;background:#cdcdcd"></div>
<div class="a" style="left:222px;top:60px;width:1px;height:20px;background:#cdcdcd"></div>
<svg style="left:4px;top:63px" width="14" height="14"><ellipse cx="4" cy="6.6" rx="2.55" ry="3.1" fill="none" stroke="#1e64a8" stroke-width="1.3"/><path d="M8.6 4.6L10.6 3.4V10" fill="none" stroke="#1e64a8" stroke-width="1.3"/></svg>
<div class="t" style="left:22px;top:64.8px;font-size:10.8px">тейк 1</div>
<div class="t" style="left:225px;top:64.8px;font-size:10.8px">111</div>
<div class="a" style="left:0;top:80px;width:445px;height:20px;background:#fff"></div>
<div class="a" style="left:0;top:79px;width:445px;height:1px;background:#cdcdcd"></div>
<div class="a" style="left:222px;top:80px;width:1px;height:20px;background:#cdcdcd"></div>
<svg style="left:4px;top:83px" width="14" height="14"><ellipse cx="4" cy="6.6" rx="2.55" ry="3.1" fill="none" stroke="#1e64a8" stroke-width="1.3"/><path d="M8.6 4.6L10.6 3.4V10" fill="none" stroke="#1e64a8" stroke-width="1.3"/></svg>
<div class="t" style="left:22px;top:84.8px;font-size:10.8px">0-бай 1-селл 1</div>
<div class="t" style="left:225px;top:84.8px;font-size:10.8px">0</div>
<div class="a" style="left:0;top:100px;width:445px;height:20px;background:#ebebeb"></div>
<div class="a" style="left:0;top:99px;width:445px;height:1px;background:#cdcdcd"></div>
<div class="a" style="left:222px;top:100px;width:1px;height:20px;background:#cdcdcd"></div>
<div class="t" style="left:4px;top:104.8px;font-size:11.2px">---<span style="letter-spacing:1px">&gt;&gt;&gt;</span> Symbol 2 Inputs <span style="letter-spacing:1px">&lt;&lt;&lt;</span>---</div>
<div class="a" style="left:0;top:120px;width:445px;height:20px;background:#fff"></div>
<div class="a" style="left:0;top:119px;width:445px;height:1px;background:#cdcdcd"></div>
<div class="a" style="left:222px;top:120px;width:1px;height:20px;background:#cdcdcd"></div>
<div class="t" style="left:4.5px;top:123.5px;font-size:11.5px;color:#c8922e">ab</div>
<div class="t" style="left:22px;top:124.8px;font-size:10.8px">2-й символ</div>
<div class="t" style="left:225px;top:124.8px;font-size:10.8px">GBPUSD</div>
<div class="a" style="left:0;top:140px;width:445px;height:20px;background:#ebebeb"></div>
<div class="a" style="left:0;top:139px;width:445px;height:1px;background:#cdcdcd"></div>
<div class="a" style="left:222px;top:140px;width:1px;height:20px;background:#cdcdcd"></div>
<svg style="left:4px;top:142px" width="14" height="14"><path d="M1.2 2.2L3 1V6" fill="none" stroke="#1e64a8" stroke-width="1.2"/><path d="M3.2 12L9.8 1" stroke="#1e64a8" stroke-width="1.2"/><path d="M7.9 8.6c0.3-1.1 1.2-1.5 2-1.5 1 0 1.9 0.6 1.9 1.5 0 1.1-1.4 1.8-3.7 3.3h3.9" fill="none" stroke="#1e64a8" stroke-width="1.2"/></svg>
<div class="t" style="left:22px;top:144.8px;font-size:10.8px">лот 2</div>
<div class="t" style="left:225px;top:144.8px;font-size:10.8px">0.1</div>
<div class="a" style="left:0;top:160px;width:445px;height:20px;background:#fff"></div>
<div class="a" style="left:0;top:159px;width:445px;height:1px;background:#cdcdcd"></div>
<div class="a" style="left:222px;top:160px;width:1px;height:20px;background:#cdcdcd"></div>
<svg style="left:4px;top:163px" width="14" height="14"><ellipse cx="4" cy="6.6" rx="2.55" ry="3.1" fill="none" stroke="#1e64a8" stroke-width="1.3"/><path d="M8.6 4.6L10.6 3.4V10" fill="none" stroke="#1e64a8" stroke-width="1.3"/></svg>
<div class="t" style="left:22px;top:164.8px;font-size:10.8px">тейк 2</div>
<div class="t" style="left:225px;top:164.8px;font-size:10.8px">111</div>
<div class="a" style="left:0;top:180px;width:445px;height:20px;background:#ebebeb"></div>
<div class="a" style="left:0;top:179px;width:445px;height:1px;background:#cdcdcd"></div>
<div class="a" style="left:222px;top:180px;width:1px;height:20px;background:#cdcdcd"></div>
<svg style="left:4px;top:183px" width="14" height="14"><ellipse cx="4" cy="6.6" rx="2.55" ry="3.1" fill="none" stroke="#1e64a8" stroke-width="1.3"/><path d="M8.6 4.6L10.6 3.4V10" fill="none" stroke="#1e64a8" stroke-width="1.3"/></svg>
<div class="t" style="left:22px;top:184.8px;font-size:10.8px">0-бай 1-селл 2</div>
<div class="t" style="left:225px;top:184.8px;font-size:10.8px">0</div>
<div class="a" style="left:0;top:200px;width:445px;height:20px;background:#fff"></div>
<div class="a" style="left:0;top:199px;width:445px;height:1px;background:#cdcdcd"></div>
<div class="a" style="left:222px;top:200px;width:1px;height:20px;background:#cdcdcd"></div>
<div class="t" style="left:4px;top:204.8px;font-size:11.2px">---<span style="letter-spacing:1px">&gt;&gt;&gt;</span> Symbol 3 Inputs <span style="letter-spacing:1px">&lt;&lt;&lt;</span>---</div>
<div class="a" style="left:0;top:220px;width:445px;height:20px;background:#ebebeb"></div>
<div class="a" style="left:0;top:219px;width:445px;height:1px;background:#cdcdcd"></div>
<div class="a" style="left:222px;top:220px;width:1px;height:20px;background:#cdcdcd"></div>
<div class="t" style="left:4.5px;top:223.5px;font-size:11.5px;color:#c8922e">ab</div>
<div class="t" style="left:22px;top:224.8px;font-size:10.8px">3-й символ</div>
<div class="a" style="left:0;top:240px;width:445px;height:20px;background:#fff"></div>
<div class="a" style="left:0;top:239px;width:445px;height:1px;background:#cdcdcd"></div>
<div class="a" style="left:222px;top:240px;width:1px;height:20px;background:#cdcdcd"></div>
<svg style="left:4px;top:242px" width="14" height="14"><path d="M1.2 2.2L3 1V6" fill="none" stroke="#1e64a8" stroke-width="1.2"/><path d="M3.2 12L9.8 1" stroke="#1e64a8" stroke-width="1.2"/><path d="M7.9 8.6c0.3-1.1 1.2-1.5 2-1.5 1 0 1.9 0.6 1.9 1.5 0 1.1-1.4 1.8-3.7 3.3h3.9" fill="none" stroke="#1e64a8" stroke-width="1.2"/></svg>
<div class="t" style="left:22px;top:244.8px;font-size:10.8px">лот 3</div>
<div class="t" style="left:225px;top:244.8px;font-size:10.8px">0.1</div>
<div class="a" style="left:0;top:260px;width:445px;height:20px;background:#ebebeb"></div>
<div class="a" style="left:0;top:259px;width:445px;height:1px;background:#cdcdcd"></div>
<div class="a" style="left:222px;top:260px;width:1px;height:20px;background:#cdcdcd"></div>
<svg style="left:4px;top:263px" width="14" height="14"><ellipse cx="4" cy="6.6" rx="2.55" ry="3.1" fill="none" stroke="#1e64a8" stroke-width="1.3"/><path d="M8.6 4.6L10.6 3.4V10" fill="none" stroke="#1e64a8" stroke-width="1.3"/></svg>
<div class="t" style="left:22px;top:264.8px;font-size:10.8px">тейк 3</div>
<div class="t" style="left:225px;top:264.8px;font-size:10.8px">111</div>
<div class="a" style="left:0;top:280px;width:445px;height:20px;background:#fff"></div>
<div class="a" style="left:0;top:279px;width:445px;height:1px;background:#cdcdcd"></div>
<div class="a" style="left:222px;top:280px;width:1px;height:20px;background:#cdcdcd"></div>
<svg style="left:4px;top:283px" width="14" height="14"><ellipse cx="4" cy="6.6" rx="2.55" ry="3.1" fill="none" stroke="#1e64a8" stroke-width="1.3"/><path d="M8.6 4.6L10.6 3.4V10" fill="none" stroke="#1e64a8" stroke-width="1.3"/></svg>
<div class="t" style="left:22px;top:284.8px;font-size:10.8px">0-бай 1-селл 3</div>
<div class="t" style="left:225px;top:284.8px;font-size:10.8px">0</div>
<div class="a" style="left:0;top:300px;width:445px;height:20px;background:#ebebeb"></div>
<div class="a" style="left:0;top:299px;width:445px;height:1px;background:#cdcdcd"></div>
<div class="a" style="left:222px;top:300px;width:1px;height:20px;background:#cdcdcd"></div>
<div class="t" style="left:4px;top:304.8px;font-size:11.2px">---<span style="letter-spacing:1px">&gt;&gt;&gt;</span> Symbol 4 Inputs <span style="letter-spacing:1px">&lt;&lt;&lt;</span>---</div>
<div class="a" style="left:0;top:320px;width:445px;height:20px;background:#fff"></div>
<div class="a" style="left:0;top:319px;width:445px;height:1px;background:#cdcdcd"></div>
<div class="a" style="left:222px;top:320px;width:1px;height:20px;background:#cdcdcd"></div>
<div class="t" style="left:4.5px;top:323.5px;font-size:11.5px;color:#c8922e">ab</div>
<div class="t" style="left:22px;top:324.8px;font-size:10.8px">4-й символ</div>
<div class="a" style="left:0;top:340px;width:445px;height:20px;background:#ebebeb"></div>
<div class="a" style="left:0;top:339px;width:445px;height:1px;background:#cdcdcd"></div>
<div class="a" style="left:222px;top:340px;width:1px;height:20px;background:#cdcdcd"></div>
<svg style="left:4px;top:342px" width="14" height="14"><path d="M1.2 2.2L3 1V6" fill="none" stroke="#1e64a8" stroke-width="1.2"/><path d="M3.2 12L9.8 1" stroke="#1e64a8" stroke-width="1.2"/><path d="M7.9 8.6c0.3-1.1 1.2-1.5 2-1.5 1 0 1.9 0.6 1.9 1.5 0 1.1-1.4 1.8-3.7 3.3h3.9" fill="none" stroke="#1e64a8" stroke-width="1.2"/></svg>
<div class="t" style="left:22px;top:344.8px;font-size:10.8px">лот 4</div>
<div class="t" style="left:225px;top:344.8px;font-size:10.8px">0.1</div>
<div class="a" style="left:0;top:360px;width:445px;height:20px;background:#fff"></div>
<div class="a" style="left:0;top:359px;width:445px;height:1px;background:#cdcdcd"></div>
<div class="a" style="left:222px;top:360px;width:1px;height:20px;background:#cdcdcd"></div>
<svg style="left:4px;top:363px" width="14" height="14"><ellipse cx="4" cy="6.6" rx="2.55" ry="3.1" fill="none" stroke="#1e64a8" stroke-width="1.3"/><path d="M8.6 4.6L10.6 3.4V10" fill="none" stroke="#1e64a8" stroke-width="1.3"/></svg>
<div class="t" style="left:22px;top:364.8px;font-size:10.8px">тейк 4</div>
<div class="t" style="left:225px;top:364.8px;font-size:10.8px">111</div>
<div class="a" style="left:0;top:380px;width:445px;height:20px;background:#ebebeb"></div>
<div class="a" style="left:0;top:379px;width:445px;height:1px;background:#cdcdcd"></div>
<div class="a" style="left:222px;top:380px;width:1px;height:20px;background:#cdcdcd"></div>
<svg style="left:4px;top:383px" width="14" height="14"><ellipse cx="4" cy="6.6" rx="2.55" ry="3.1" fill="none" stroke="#1e64a8" stroke-width="1.3"/><path d="M8.6 4.6L10.6 3.4V10" fill="none" stroke="#1e64a8" stroke-width="1.3"/></svg>
<div class="t" style="left:22px;top:384.8px;font-size:10.8px">0-бай 1-селл 4</div>
<div class="t" style="left:225px;top:384.8px;font-size:10.8px">0</div>
<div class="a" style="left:0;top:400px;width:445px;height:20px;background:#fff"></div>
<div class="a" style="left:0;top:399px;width:445px;height:1px;background:#cdcdcd"></div>
<div class="a" style="left:222px;top:400px;width:1px;height:20px;background:#cdcdcd"></div>
<div class="t" style="left:4px;top:404.8px;font-size:11.2px">---<span style="letter-spacing:1px">&gt;&gt;&gt;</span> Symbol 5 Inputs <span style="letter-spacing:1px">&lt;&lt;&lt;</span>---</div>
<div class="a" style="left:0;top:420px;width:445px;height:20px;background:#ebebeb"></div>
<div class="a" style="left:0;top:419px;width:445px;height:1px;background:#cdcdcd"></div>
<div class="a" style="left:222px;top:420px;width:1px;height:20px;background:#cdcdcd"></div>
<div class="t" style="left:4.5px;top:423.5px;font-size:11.5px;color:#c8922e">ab</div>
<div class="t" style="left:22px;top:424.8px;font-size:10.8px">5-й символ</div>
<div class="a" style="left:0;top:440px;width:445px;height:20px;background:#fff"></div>
<div class="a" style="left:0;top:439px;width:445px;height:1px;background:#cdcdcd"></div>
<div class="a" style="left:222px;top:440px;width:1px;height:20px;background:#cdcdcd"></div>
<svg style="left:4px;top:442px" width="14" height="14"><path d="M1.2 2.2L3 1V6" fill="none" stroke="#1e64a8" stroke-width="1.2"/><path d="M3.2 12L9.8 1" stroke="#1e64a8" stroke-width="1.2"/><path d="M7.9 8.6c0.3-1.1 1.2-1.5 2-1.5 1 0 1.9 0.6 1.9 1.5 0 1.1-1.4 1.8-3.7 3.3h3.9" fill="none" stroke="#1e64a8" stroke-width="1.2"/></svg>
<div class="t" style="left:22px;top:444.8px;font-size:10.8px">лот 5</div>
<div class="t" style="left:225px;top:444.8px;font-size:10.8px">0.1</div>
<div class="a" style="left:0;top:460px;width:445px;height:20px;background:#ebebeb"></div>
<div class="a" style="left:0;top:459px;width:445px;height:1px;background:#cdcdcd"></div>
<div class="a" style="left:222px;top:460px;width:1px;height:20px;background:#cdcdcd"></div>
<svg style="left:4px;top:463px" width="14" height="14"><ellipse cx="4" cy="6.6" rx="2.55" ry="3.1" fill="none" stroke="#1e64a8" stroke-width="1.3"/><path d="M8.6 4.6L10.6 3.4V10" fill="none" stroke="#1e64a8" stroke-width="1.3"/></svg>
<div class="t" style="left:22px;top:464.8px;font-size:10.8px">тейк 5</div>
<div class="t" style="left:225px;top:464.8px;font-size:10.8px">111</div>
<div class="a" style="left:0;top:480px;width:445px;height:20px;background:#fff"></div>
<div class="a" style="left:0;top:479px;width:445px;height:1px;background:#cdcdcd"></div>
<div class="a" style="left:222px;top:480px;width:1px;height:20px;background:#cdcdcd"></div>
<svg style="left:4px;top:483px" width="14" height="14"><ellipse cx="4" cy="6.6" rx="2.55" ry="3.1" fill="none" stroke="#1e64a8" stroke-width="1.3"/><path d="M8.6 4.6L10.6 3.4V10" fill="none" stroke="#1e64a8" stroke-width="1.3"/></svg>
<div class="t" style="left:22px;top:484.8px;font-size:10.8px">0-бай 1-селл 5</div>
<div class="t" style="left:225px;top:484.8px;font-size:10.8px">0</div>
<div class="a" style="left:0;top:500px;width:445px;height:20px;background:#ebebeb"></div>
<div class="a" style="left:0;top:499px;width:445px;height:1px;background:#cdcdcd"></div>
<div class="a" style="left:222px;top:500px;width:1px;height:20px;background:#cdcdcd"></div>
<div class="t" style="left:4px;top:504.8px;font-size:11.2px">---<span style="letter-spacing:1px">&gt;&gt;&gt;</span> Symbol 6 Inputs <span style="letter-spacing:1px">&lt;&lt;&lt;</span>---</div>
<div class="a" style="left:0;top:520px;width:445px;height:20px;background:#fff"></div>
<div class="a" style="left:0;top:519px;width:445px;height:1px;background:#cdcdcd"></div>
<div class="a" style="left:222px;top:520px;width:1px;height:20px;background:#cdcdcd"></div>
<div class="t" style="left:4.5px;top:523.5px;font-size:11.5px;color:#c8922e">ab</div>
<div class="t" style="left:22px;top:524.8px;font-size:10.8px">6-й символ</div>
<div class="a" style="left:0;top:540px;width:445px;height:20px;background:#ebebeb"></div>
<div class="a" style="left:0;top:539px;width:445px;height:1px;background:#cdcdcd"></div>
<div class="a" style="left:222px;top:540px;width:1px;height:20px;background:#cdcdcd"></div>
<svg style="left:4px;top:542px" width="14" height="14"><path d="M1.2 2.2L3 1V6" fill="none" stroke="#1e64a8" stroke-width="1.2"/><path d="M3.2 12L9.8 1" stroke="#1e64a8" stroke-width="1.2"/><path d="M7.9 8.6c0.3-1.1 1.2-1.5 2-1.5 1 0 1.9 0.6 1.9 1.5 0 1.1-1.4 1.8-3.7 3.3h3.9" fill="none" stroke="#1e64a8" stroke-width="1.2"/></svg>
<div class="t" style="left:22px;top:544.8px;font-size:10.8px">лот 6</div>
<div class="t" style="left:225px;top:544.8px;font-size:10.8px">0.1</div>
<div class="a" style="left:0;top:560px;width:445px;height:20px;background:#fff"></div>
<div class="a" style="left:0;top:559px;width:445px;height:1px;background:#cdcdcd"></div>
<div class="a" style="left:222px;top:560px;width:1px;height:20px;background:#cdcdcd"></div>
<svg style="left:4px;top:563px" width="14" height="14"><ellipse cx="4" cy="6.6" rx="2.55" ry="3.1" fill="none" stroke="#1e64a8" stroke-width="1.3"/><path d="M8.6 4.6L10.6 3.4V10" fill="none" stroke="#1e64a8" stroke-width="1.3"/></svg>
<div class="t" style="left:22px;top:564.8px;font-size:10.8px">тейк 6</div>
<div class="t" style="left:225px;top:564.8px;font-size:10.8px">111</div>
<div class="a" style="left:0;top:580px;width:445px;height:20px;background:#ebebeb"></div>
<div class="a" style="left:0;top:579px;width:445px;height:1px;background:#cdcdcd"></div>
<div class="a" style="left:222px;top:580px;width:1px;height:20px;background:#cdcdcd"></div>
<svg style="left:4px;top:583px" width="14" height="14"><ellipse cx="4" cy="6.6" rx="2.55" ry="3.1" fill="none" stroke="#1e64a8" stroke-width="1.3"/><path d="M8.6 4.6L10.6 3.4V10" fill="none" stroke="#1e64a8" stroke-width="1.3"/></svg>
<div class="t" style="left:22px;top:584.8px;font-size:10.8px">0-бай 1-селл 6</div>
<div class="t" style="left:225px;top:584.8px;font-size:10.8px">0</div>
</div>
<div class="a" style="left:887px;top:172px;width:17px;height:609px;background:#f0f0f0;"></div>
<svg style="left:889px;top:179px;" width="11" height="7" viewBox="0 0 11 7"><path d="M2.1 5.3L5.5 1.9 8.9 5.3" fill="none" stroke="#505050" stroke-width="2"/></svg>
<div class="a" style="left:887px;top:190px;width:15px;height:108px;background:#cdcdcd;"></div>
<svg style="left:889px;top:768px;" width="11" height="7" viewBox="0 0 11 7"><path d="M2.1 1.7L5.5 5.1 8.9 1.7" fill="none" stroke="#505050" stroke-width="2"/></svg>
<div class="a" style="left:913px;top:728px;width:103px;height:21px;background:#e1e1e1;border:1px solid #adadad"></div>
<div class="t" style="left:664.5px;width:600px;text-align:center;top:733.62px;font-size:10.8px;color:#000;">Загрузить</div>
<div class="a" style="left:913px;top:759px;width:103px;height:21px;background:#e1e1e1;border:1px solid #adadad"></div>
<div class="t" style="left:664.5px;width:600px;text-align:center;top:764.62px;font-size:10.8px;color:#000;">Сохранить</div>
<div class="a" style="left:791px;top:804px;width:73px;height:21px;background:#e1e1e1;border:2px solid #0078d7"></div>
<div class="t" style="left:527.5px;width:600px;text-align:center;top:809.62px;font-size:10.8px;color:#000;">OK</div>
<div class="a" style="left:871px;top:804px;width:73px;height:21px;background:#e1e1e1;border:1px solid #adadad"></div>
<div class="t" style="left:607.5px;width:600px;text-align:center;top:809.62px;font-size:10.8px;color:#000;">Отмена</div>
<div class="a" style="left:951px;top:804px;width:73px;height:21px;background:#e1e1e1;border:1px solid #adadad"></div>
<div class="t" style="left:687.5px;width:600px;text-align:center;top:809.62px;font-size:10.8px;color:#000;">Сброс</div>
<div class="a" style="left:1029px;top:823px;width:2px;height:2px;background:#bdbdbd;"></div>
<div class="a" style="left:1026px;top:826px;width:2px;height:2px;background:#bdbdbd;"></div>
<div class="a" style="left:1029px;top:826px;width:2px;height:2px;background:#bdbdbd;"></div>
<div class="a" style="left:1023px;top:829px;width:2px;height:2px;background:#bdbdbd;"></div>
<div class="a" style="left:1026px;top:829px;width:2px;height:2px;background:#bdbdbd;"></div>
<div class="a" style="left:1029px;top:829px;width:2px;height:2px;background:#bdbdbd;"></div>
</body></html>
